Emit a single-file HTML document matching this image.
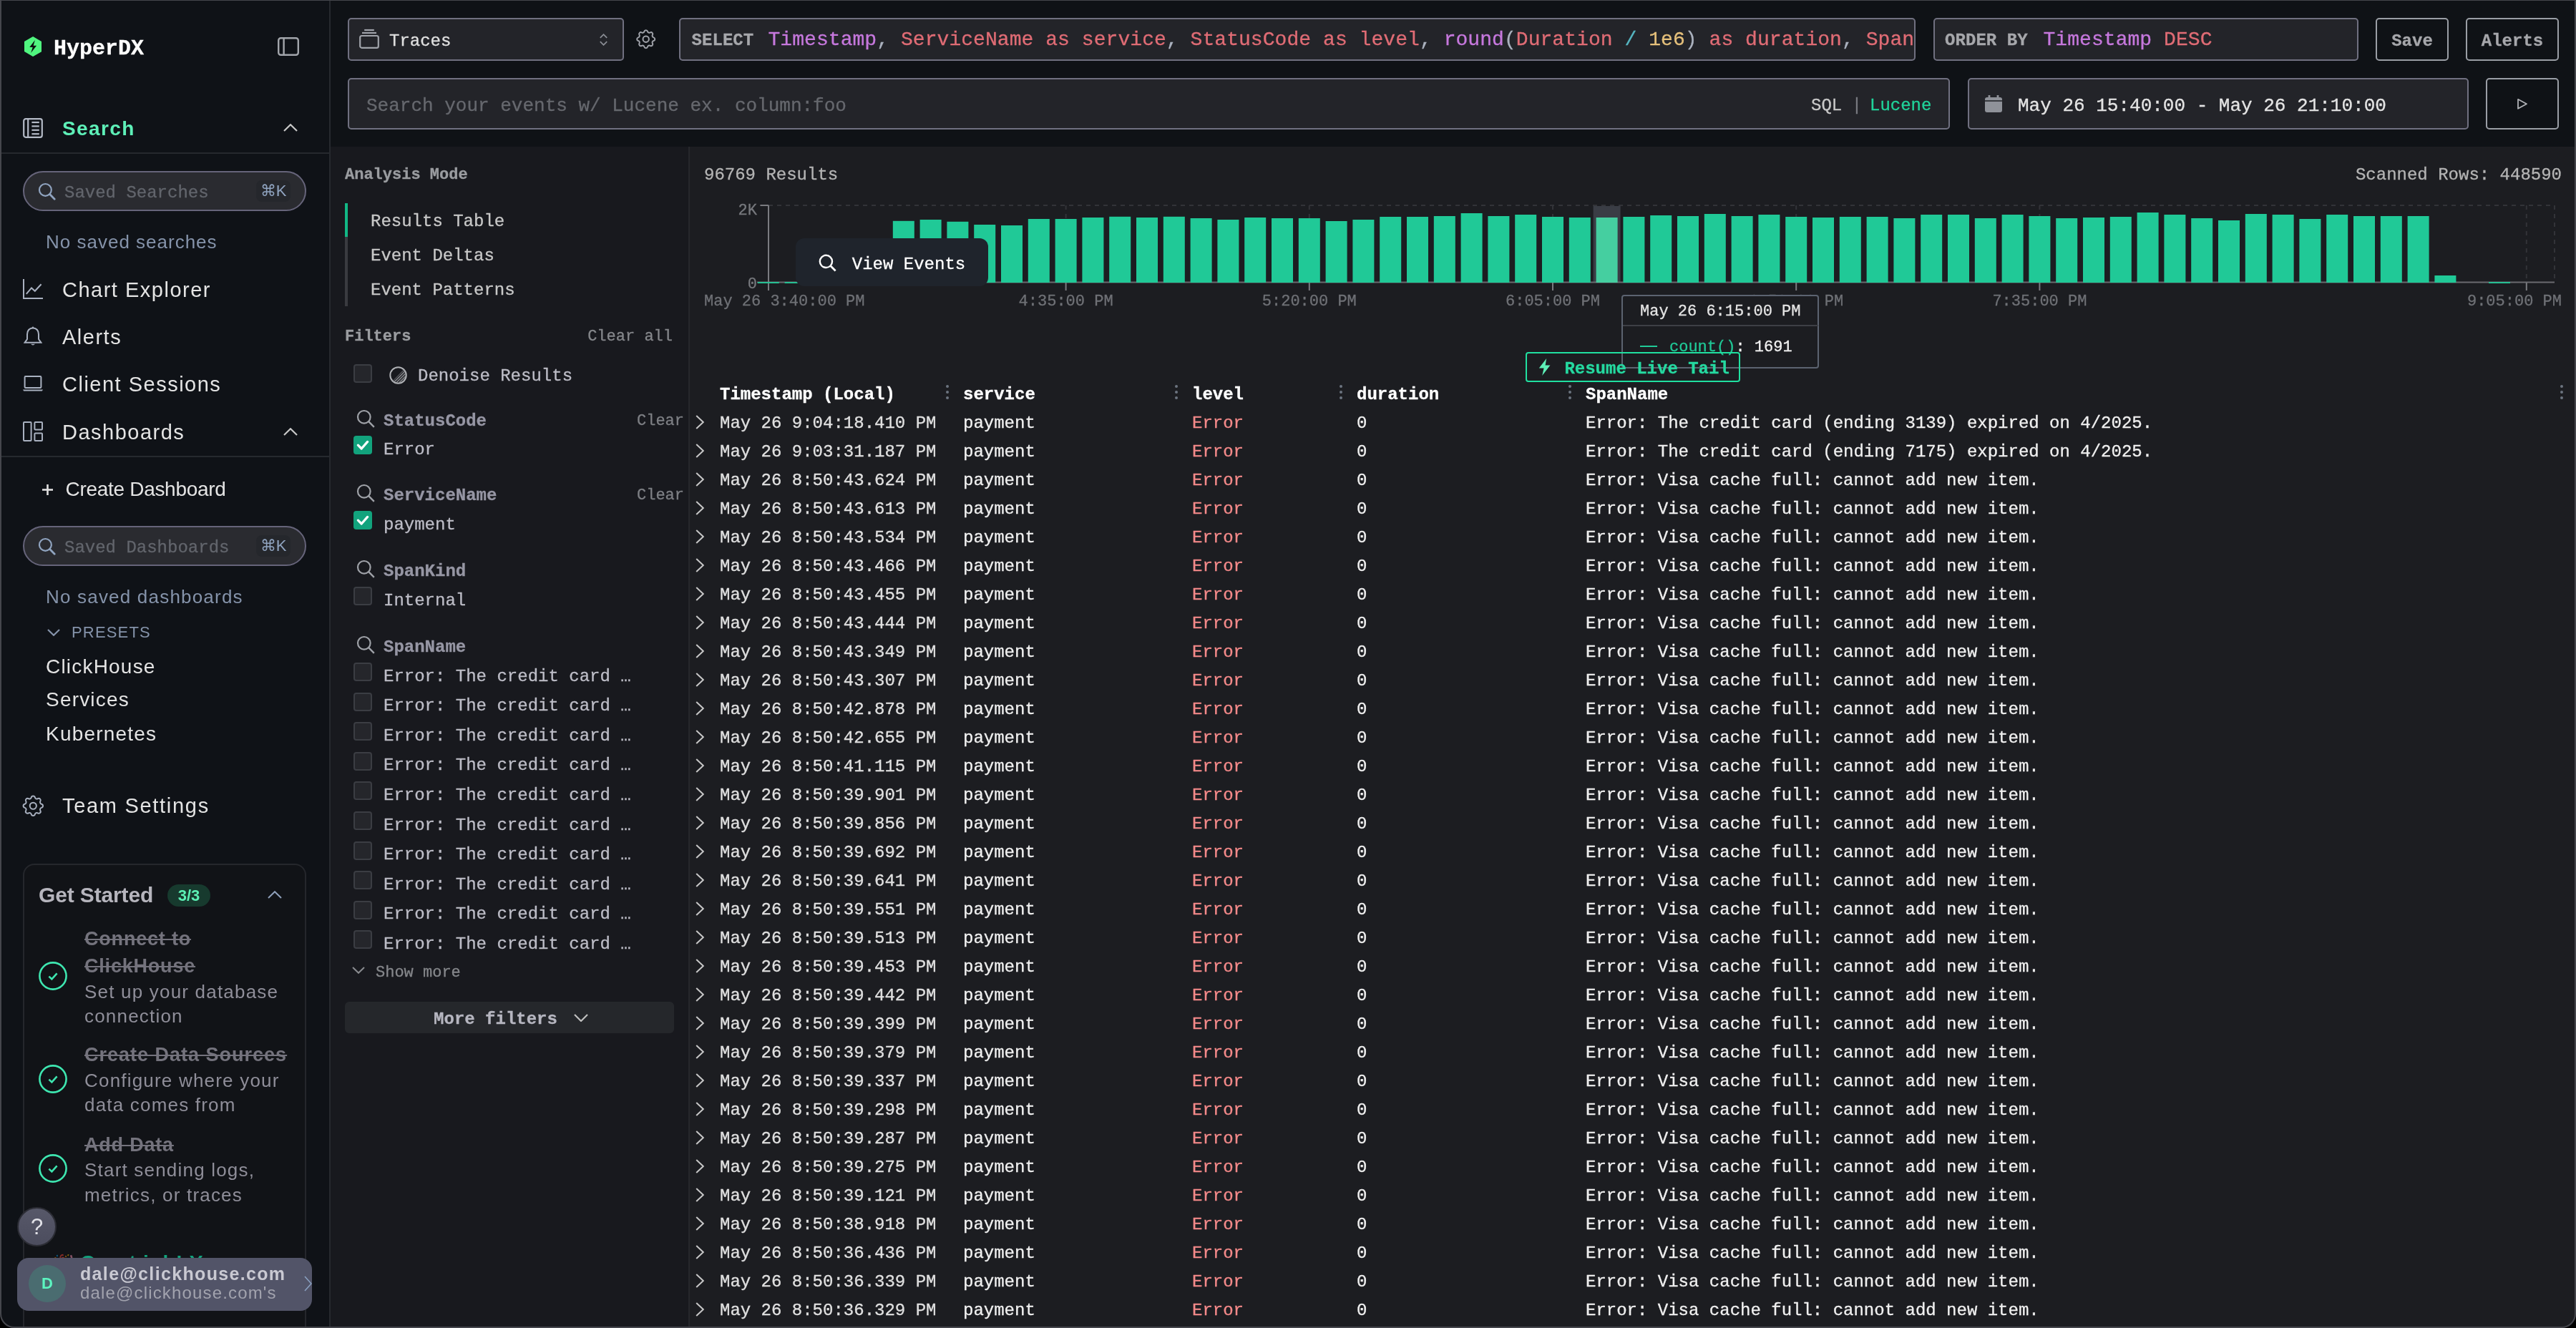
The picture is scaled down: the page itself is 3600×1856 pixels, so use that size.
<!DOCTYPE html>
<html><head><meta charset="utf-8"><title>HyperDX Search</title>
<style>
html,body{margin:0;padding:0;background:#000;}
body{width:1800px;height:928px;position:relative;overflow:hidden;}
@media (min-width: 2400px) { html { zoom: 2; } }
</style></head><body>
<div id="frame" style="will-change:transform;position:absolute;left:0;top:0;width:1800px;height:928px;overflow:hidden;background:#1c1d21;border-radius:0 0 10px 10px;"><div style="position:absolute;left:0px;top:0px;width:230px;height:928px;background:#0f1217;"></div><div style="position:absolute;left:230px;top:0px;width:1570px;height:102.5px;background:#0f1216;"></div><div style="position:absolute;left:230px;top:102.5px;width:251px;height:826px;background:#18191e;"></div><div style="position:absolute;left:481px;top:102.5px;width:1px;height:826px;background:#26272c;"></div><div style="position:absolute;left:230px;top:0px;width:1px;height:928px;background:#26292e;"></div><svg style="position:absolute;left:16.93px;top:25.46px;" width="12.1" height="14.04" viewBox="0 0 12.1 14.04"><path d="M6.05 0 L12.1 3.5 L12.1 10.54 L6.05 14.04 L0 10.54 L0 3.5 Z" fill="#50f57f"/><path d="M7.45 2.45 L3.65 7.55 L5.85 7.55 L4.6 11.5 L8.55 6.4 L6.35 6.4 Z" fill="#0d1110"/></svg><div style="position:absolute;left:37.5px;top:23.25px;line-height:21px;font-family:'Liberation Mono', monospace;font-size:15px;font-weight:700;color:#ffffff;white-space:nowrap;-webkit-text-stroke:0.15px currentColor;">HyperDX</div><svg style="position:absolute;left:194px;top:26px;" width="15" height="13" viewBox="0 0 15 13"><rect x="0.6" y="0.6" width="13.8" height="11.8" rx="1.6" fill="none" stroke="#a2a5ab" stroke-width="1.2"/><line x1="4.3" y1="0.6" x2="4.3" y2="12.4" stroke="#a2a5ab" stroke-width="1.2"/></svg><svg style="position:absolute;left:16px;top:82.5px;" width="14" height="14" viewBox="0 0 14 14"><rect x="0.6" y="0.6" width="12.8" height="12.8" rx="1.4" fill="none" stroke="#b4bac6" stroke-width="1.1"/><line x1="3.6" y1="0.6" x2="3.6" y2="13.4" stroke="#b4bac6" stroke-width="1.1"/><g stroke="#b4bac6" stroke-width="1.1"><line x1="6.2" y1="3" x2="11.4" y2="3"/><line x1="6.2" y1="5.7" x2="11.4" y2="5.7"/><line x1="6.2" y1="8.4" x2="11.4" y2="8.4"/><line x1="6.2" y1="11.1" x2="11.4" y2="11.1"/></g></svg><div style="position:absolute;left:43.5px;top:79.8px;line-height:20px;font-family:'Liberation Sans', sans-serif;font-size:14px;font-weight:700;color:#5ef0b8;white-space:nowrap;letter-spacing:0.7px;">Search</div><svg style="position:absolute;left:198px;top:86.7px;" width="10" height="5.5" viewBox="0 0 10 5.5"><polyline points="0.5,5.0 5.0,0.6 9.5,5.0" fill="none" stroke="#c8c8c8" stroke-width="1.1"/></svg><div style="position:absolute;left:0px;top:106.5px;width:230px;height:1px;background:#25292e;"></div><div style="position:absolute;left:16px;top:119.5px;width:198px;height:28px;box-sizing:border-box;border:1px solid #66647a;border-radius:14px;background:#2a2b30;"></div><svg style="position:absolute;left:26.5px;top:127.5px;" width="12.5" height="12.5" viewBox="0 0 12.5 12.5"><circle cx="5.2" cy="5.2" r="4.2" fill="none" stroke="#90a4c0" stroke-width="1.1"/><line x1="8.3" y1="8.3" x2="11.6" y2="11.6" stroke="#90a4c0" stroke-width="1.4" stroke-linecap="round"/></svg><div style="position:absolute;left:45px;top:126.25px;line-height:17px;font-family:'Liberation Mono', monospace;font-size:12px;font-weight:400;color:#62656c;white-space:nowrap;-webkit-text-stroke:0.15px currentColor;">Saved Searches</div><div style="position:absolute;left:179px;top:126.0px;width:24px;height:15px;border-radius:4px;background:#25272c;"></div><div style="position:absolute;left:-209px;width:800px;text-align:center;top:126.0px;line-height:15px;font-family:'Liberation Sans', sans-serif;font-size:11px;font-weight:400;color:#90a4c0;white-space:nowrap;">⌘K</div><div style="position:absolute;left:32px;top:159.75px;line-height:18px;font-family:'Liberation Sans', sans-serif;font-size:13px;font-weight:400;color:#8593aa;white-space:nowrap;letter-spacing:0.5px;">No saved searches</div><svg style="position:absolute;left:16px;top:195px;" width="14" height="14" viewBox="0 0 14 14"><polyline points="0.5,0 0.5,13.5 14,13.5" fill="none" stroke="#a9b1c0" stroke-width="1"/><polyline points="2.4,10.4 6,6.2 8.4,8.4 12.8,3.6" fill="none" stroke="#a9b1c0" stroke-width="1"/></svg><div style="position:absolute;left:43.5px;top:192.5px;line-height:20px;font-family:'Liberation Sans', sans-serif;font-size:14.5px;font-weight:400;color:#e4e4e4;white-space:nowrap;letter-spacing:0.75px;">Chart Explorer</div><svg style="position:absolute;left:16.5px;top:228px;" width="13" height="14.5" viewBox="0 0 13 14.5"><path d="M6.5 1.2 C3.9 1.2 2.5 3.2 2.5 5.6 L2.5 9 L0.8 11.4 L12.2 11.4 L10.5 9 L10.5 5.6 C10.5 3.2 9.1 1.2 6.5 1.2 Z" fill="none" stroke="#a9b1c0" stroke-width="1"/><path d="M5 12.4 Q6.5 14.2 8 12.4 Z" fill="#a9b1c0"/><circle cx="6.5" cy="0.9" r="0.6" fill="#a9b1c0"/></svg><div style="position:absolute;left:43.5px;top:225.5px;line-height:20px;font-family:'Liberation Sans', sans-serif;font-size:14.5px;font-weight:400;color:#e4e4e4;white-space:nowrap;letter-spacing:0.75px;">Alerts</div><svg style="position:absolute;left:16px;top:262.5px;" width="14" height="11" viewBox="0 0 14 11"><rect x="1.3" y="0.5" width="11.4" height="8" rx="0.6" fill="none" stroke="#a9b1c0" stroke-width="1"/><path d="M0 9.8 L14 9.8 L13.4 10.7 L0.6 10.7 Z" fill="#a9b1c0"/></svg><div style="position:absolute;left:43.5px;top:258.5px;line-height:20px;font-family:'Liberation Sans', sans-serif;font-size:14.5px;font-weight:400;color:#e4e4e4;white-space:nowrap;letter-spacing:0.75px;">Client Sessions</div><svg style="position:absolute;left:16px;top:294.5px;" width="14" height="14" viewBox="0 0 14 14"><rect x="0.5" y="0.5" width="5.3" height="13" rx="0.5" fill="none" stroke="#a9b1c0" stroke-width="1"/><rect x="8.2" y="0.5" width="5.3" height="5.3" rx="0.5" fill="none" stroke="#a9b1c0" stroke-width="1"/><rect x="8.2" y="8.2" width="5.3" height="5.3" rx="0.5" fill="none" stroke="#a9b1c0" stroke-width="1"/></svg><div style="position:absolute;left:43.5px;top:292.0px;line-height:20px;font-family:'Liberation Sans', sans-serif;font-size:14.5px;font-weight:400;color:#e4e4e4;white-space:nowrap;letter-spacing:0.75px;">Dashboards</div><svg style="position:absolute;left:198px;top:299px;" width="10" height="5.5" viewBox="0 0 10 5.5"><polyline points="0.5,5.0 5.0,0.6 9.5,5.0" fill="none" stroke="#c8c8c8" stroke-width="1.1"/></svg><div style="position:absolute;left:0px;top:318.5px;width:230px;height:1px;background:#25292e;"></div><svg style="position:absolute;left:29.5px;top:338.5px;" width="7.5" height="7.5" viewBox="0 0 7.5 7.5"><line x1="3.75" y1="0" x2="3.75" y2="7.5" stroke="#e0e0e0" stroke-width="1.3"/><line x1="0" y1="3.75" x2="7.5" y2="3.75" stroke="#e0e0e0" stroke-width="1.3"/></svg><div style="position:absolute;left:45.75px;top:332.0px;line-height:20px;font-family:'Liberation Sans', sans-serif;font-size:14px;font-weight:400;color:#e4e4e4;white-space:nowrap;letter-spacing:-0.15px;">Create Dashboard</div><div style="position:absolute;left:16px;top:367.5px;width:198px;height:28px;box-sizing:border-box;border:1px solid #66647a;border-radius:14px;background:#2a2b30;"></div><svg style="position:absolute;left:26.5px;top:375.5px;" width="12.5" height="12.5" viewBox="0 0 12.5 12.5"><circle cx="5.2" cy="5.2" r="4.2" fill="none" stroke="#90a4c0" stroke-width="1.1"/><line x1="8.3" y1="8.3" x2="11.6" y2="11.6" stroke="#90a4c0" stroke-width="1.4" stroke-linecap="round"/></svg><div style="position:absolute;left:45px;top:374.25px;line-height:17px;font-family:'Liberation Mono', monospace;font-size:12px;font-weight:400;color:#62656c;white-space:nowrap;-webkit-text-stroke:0.15px currentColor;">Saved Dashboards</div><div style="position:absolute;left:179px;top:374.0px;width:24px;height:15px;border-radius:4px;background:#25272c;"></div><div style="position:absolute;left:-209px;width:800px;text-align:center;top:374.0px;line-height:15px;font-family:'Liberation Sans', sans-serif;font-size:11px;font-weight:400;color:#90a4c0;white-space:nowrap;">⌘K</div><div style="position:absolute;left:32px;top:407.75px;line-height:18px;font-family:'Liberation Sans', sans-serif;font-size:13px;font-weight:400;color:#8593aa;white-space:nowrap;letter-spacing:0.6px;">No saved dashboards</div><svg style="position:absolute;left:33px;top:439.5px;" width="9" height="5" viewBox="0 0 9 5"><polyline points="0.5,0.5 4.5,4.4 8.5,0.5" fill="none" stroke="#8593aa" stroke-width="1.1"/></svg><div style="position:absolute;left:50px;top:434.5px;line-height:15px;font-family:'Liberation Sans', sans-serif;font-size:11px;font-weight:400;color:#8593aa;white-space:nowrap;letter-spacing:0.58px;">PRESETS</div><div style="position:absolute;left:32px;top:455.75px;line-height:20px;font-family:'Liberation Sans', sans-serif;font-size:14px;font-weight:400;color:#e4e4e4;white-space:nowrap;letter-spacing:0.6px;">ClickHouse</div><div style="position:absolute;left:32px;top:479.0px;line-height:20px;font-family:'Liberation Sans', sans-serif;font-size:14px;font-weight:400;color:#e4e4e4;white-space:nowrap;letter-spacing:0.6px;">Services</div><div style="position:absolute;left:32px;top:502.75px;line-height:20px;font-family:'Liberation Sans', sans-serif;font-size:14px;font-weight:400;color:#e4e4e4;white-space:nowrap;letter-spacing:0.6px;">Kubernetes</div><svg style="position:absolute;left:13.85px;top:553.85px;" width="18.3" height="18.3" viewBox="0 0 24 24"><path d="M10.325 4.317c.426 -1.756 2.924 -1.756 3.35 0a1.724 1.724 0 0 0 2.573 1.066c1.543 -.94 3.31 .826 2.37 2.37a1.724 1.724 0 0 0 1.065 2.572c1.756 .426 1.756 2.924 0 3.35a1.724 1.724 0 0 0 -1.066 2.573c.94 1.543 -.826 3.31 -2.37 2.37a1.724 1.724 0 0 0 -2.572 1.065c-.426 1.756 -2.924 1.756 -3.35 0a1.724 1.724 0 0 0 -2.573 -1.066c-1.543 .94 -3.31 -.826 -2.37 -2.37a1.724 1.724 0 0 0 -1.065 -2.572c-1.756 -.426 -1.756 -2.924 0 -3.35a1.724 1.724 0 0 0 1.066 -2.573c-.94 -1.543 .826 -3.31 2.37 -2.37c1 .608 2.296 .07 2.572 -1.065z" fill="none" stroke="#a9b1c0" stroke-width="1.3"/><circle cx="12" cy="12" r="3" fill="none" stroke="#a9b1c0" stroke-width="1.3"/></svg><div style="position:absolute;left:43.5px;top:553.0px;line-height:20px;font-family:'Liberation Sans', sans-serif;font-size:14.5px;font-weight:400;color:#e4e4e4;white-space:nowrap;letter-spacing:0.85px;">Team Settings</div><div style="position:absolute;left:16px;top:603.5px;width:198px;height:340px;box-sizing:border-box;border:1px solid #25272c;border-radius:8px;background:#111317;"></div><div style="position:absolute;left:27px;top:615.0px;line-height:21px;font-family:'Liberation Sans', sans-serif;font-size:15px;font-weight:700;color:#b6b5bd;white-space:nowrap;letter-spacing:-0.07px;">Get Started</div><div style="position:absolute;left:117px;top:618px;width:30px;height:15.5px;border-radius:8px;background:#173a2e;"></div><div style="position:absolute;left:-268px;width:800px;text-align:center;top:618.3px;line-height:15px;font-family:'Liberation Sans', sans-serif;font-size:11px;font-weight:700;color:#5cf0b5;white-space:nowrap;">3/3</div><svg style="position:absolute;left:187px;top:622.5px;" width="10" height="5.5" viewBox="0 0 10 5.5"><polyline points="0.5,5.0 5.0,0.6 9.5,5.0" fill="none" stroke="#8fa0bb" stroke-width="1"/></svg><svg style="position:absolute;left:27px;top:671.75px;" width="20" height="20" viewBox="0 0 20 20"><circle cx="10" cy="10" r="9.3" fill="none" stroke="#3ee6b0" stroke-width="1.3"/><polyline points="7.2,10.3 9.2,12.2 12.8,8.2" fill="none" stroke="#3ee6b0" stroke-width="1.3"/></svg><div style="position:absolute;left:59px;top:646.5px;line-height:19px;font-family:'Liberation Sans', sans-serif;font-size:13.5px;font-weight:700;color:#74737d;white-space:nowrap;letter-spacing:0.4px;text-decoration:line-through;">Connect to</div><div style="position:absolute;left:59px;top:665.5px;line-height:19px;font-family:'Liberation Sans', sans-serif;font-size:13.5px;font-weight:700;color:#74737d;white-space:nowrap;letter-spacing:0.4px;text-decoration:line-through;">ClickHouse</div><div style="position:absolute;left:59px;top:683.75px;line-height:18px;font-family:'Liberation Sans', sans-serif;font-size:13px;font-weight:400;color:#8f8e99;white-space:nowrap;letter-spacing:0.6px;">Set up your database</div><div style="position:absolute;left:59px;top:700.75px;line-height:18px;font-family:'Liberation Sans', sans-serif;font-size:13px;font-weight:400;color:#8f8e99;white-space:nowrap;letter-spacing:0.6px;">connection</div><svg style="position:absolute;left:27px;top:744px;" width="20" height="20" viewBox="0 0 20 20"><circle cx="10" cy="10" r="9.3" fill="none" stroke="#3ee6b0" stroke-width="1.3"/><polyline points="7.2,10.3 9.2,12.2 12.8,8.2" fill="none" stroke="#3ee6b0" stroke-width="1.3"/></svg><div style="position:absolute;left:59px;top:727.5px;line-height:19px;font-family:'Liberation Sans', sans-serif;font-size:13.5px;font-weight:700;color:#74737d;white-space:nowrap;letter-spacing:0.5px;text-decoration:line-through;">Create Data Sources</div><div style="position:absolute;left:59px;top:746.0px;line-height:18px;font-family:'Liberation Sans', sans-serif;font-size:13px;font-weight:400;color:#8f8e99;white-space:nowrap;letter-spacing:0.6px;">Configure where your</div><div style="position:absolute;left:59px;top:763.0px;line-height:18px;font-family:'Liberation Sans', sans-serif;font-size:13px;font-weight:400;color:#8f8e99;white-space:nowrap;letter-spacing:0.6px;">data comes from</div><svg style="position:absolute;left:27px;top:806.5px;" width="20" height="20" viewBox="0 0 20 20"><circle cx="10" cy="10" r="9.3" fill="none" stroke="#3ee6b0" stroke-width="1.3"/><polyline points="7.2,10.3 9.2,12.2 12.8,8.2" fill="none" stroke="#3ee6b0" stroke-width="1.3"/></svg><div style="position:absolute;left:59px;top:790.5px;line-height:19px;font-family:'Liberation Sans', sans-serif;font-size:13.5px;font-weight:700;color:#74737d;white-space:nowrap;letter-spacing:0.4px;text-decoration:line-through;">Add Data</div><div style="position:absolute;left:59px;top:808.5px;line-height:18px;font-family:'Liberation Sans', sans-serif;font-size:13px;font-weight:400;color:#8f8e99;white-space:nowrap;letter-spacing:0.6px;">Start sending logs,</div><div style="position:absolute;left:59px;top:825.75px;line-height:18px;font-family:'Liberation Sans', sans-serif;font-size:13px;font-weight:400;color:#8f8e99;white-space:nowrap;letter-spacing:0.6px;">metrics, or traces</div><div style="position:absolute;left:12px;top:843.5px;width:27.5px;height:27.5px;box-sizing:border-box;border-radius:50%;background:linear-gradient(#575869,#4c4d5e);border:1px solid #2c2d35;"></div><div style="position:absolute;left:-374.25px;width:800px;text-align:center;top:846.5px;line-height:22px;font-family:'Liberation Sans', sans-serif;font-size:15.5px;font-weight:400;color:#e2e2e8;white-space:nowrap;">?</div><div style="position:absolute;left:37px;top:874.5px;line-height:17px;font-family:'Liberation Sans', sans-serif;font-size:12px;font-weight:400;color:#c04060;white-space:nowrap;opacity:0.5;">🎉</div><div style="position:absolute;left:56px;top:870px;width:102px;height:20px;overflow:hidden;"><div style="position:absolute;left:0;top:2.4px;line-height:20px;font-family:'Liberation Sans', sans-serif;font-size:14px;font-weight:700;color:#12a37d;white-space:nowrap;letter-spacing:0.6px;">Great job! You&#39;re all set</div></div><div style="position:absolute;left:12px;top:879px;width:206px;height:37px;border-radius:8px;background:#525468;"></div><div style="position:absolute;left:20px;top:884px;width:26px;height:26px;border-radius:50%;background:#4a6c70;"></div><div style="position:absolute;left:-367px;width:800px;text-align:center;top:889.5px;line-height:15px;font-family:'Liberation Sans', sans-serif;font-size:11px;font-weight:700;color:#5cf5c0;white-space:nowrap;">D</div><div style="position:absolute;left:56px;top:880.75px;line-height:18px;font-family:'Liberation Sans', sans-serif;font-size:12.5px;font-weight:700;color:#c9c9d2;white-space:nowrap;letter-spacing:0.67px;">dale@clickhouse.com</div><div style="position:absolute;left:56px;top:895.0px;line-height:17px;font-family:'Liberation Sans', sans-serif;font-size:12px;font-weight:400;color:#a2a3ae;white-space:nowrap;letter-spacing:0.58px;">dale@clickhouse.com&#x27;s</div><svg style="position:absolute;left:212.5px;top:891.5px;" width="5.5" height="11" viewBox="0 0 5.5 11"><polyline points="0.5,0.5 5,5.5 0.5,10.5" fill="none" stroke="#8aa0c0" stroke-width="0.8"/></svg><div style="position:absolute;left:243px;top:12.5px;width:193px;height:30px;box-sizing:border-box;border:1px solid #707080;border-radius:2.5px;background:#232429;"></div><svg style="position:absolute;left:251px;top:20px;" width="14" height="14" viewBox="0 0 14 14"><rect x="0.6" y="5" width="12.8" height="8.4" rx="1.2" fill="none" stroke="#a0a3aa" stroke-width="1.1"/><line x1="2" y1="3" x2="12" y2="3" stroke="#a0a3aa" stroke-width="1.1"/><line x1="3.6" y1="1" x2="10.4" y2="1" stroke="#a0a3aa" stroke-width="1.1"/></svg><div style="position:absolute;left:272px;top:20.25px;line-height:17px;font-family:'Liberation Mono', monospace;font-size:12px;font-weight:400;color:#e0e0e0;white-space:nowrap;-webkit-text-stroke:0.15px currentColor;">Traces</div><svg style="position:absolute;left:418.75px;top:23.5px;" width="5.5" height="8.5" viewBox="0 0 5.5 8.5"><polyline points="0.4,2.9 2.75,0.6 5.1,2.9" fill="none" stroke="#8a8d94" stroke-width="0.9"/><polyline points="0.4,5.6 2.75,7.9 5.1,5.6" fill="none" stroke="#8a8d94" stroke-width="0.9"/></svg><svg style="position:absolute;left:442.9px;top:19.15px;" width="16.7" height="16.7" viewBox="0 0 24 24"><path d="M10.325 4.317c.426 -1.756 2.924 -1.756 3.35 0a1.724 1.724 0 0 0 2.573 1.066c1.543 -.94 3.31 .826 2.37 2.37a1.724 1.724 0 0 0 1.065 2.572c1.756 .426 1.756 2.924 0 3.35a1.724 1.724 0 0 0 -1.066 2.573c.94 1.543 -.826 3.31 -2.37 2.37a1.724 1.724 0 0 0 -2.572 1.065c-.426 1.756 -2.924 1.756 -3.35 0a1.724 1.724 0 0 0 -2.573 -1.066c-1.543 .94 -3.31 -.826 -2.37 -2.37a1.724 1.724 0 0 0 -1.065 -2.572c-1.756 -.426 -1.756 -2.924 0 -3.35a1.724 1.724 0 0 0 1.066 -2.573c-.94 -1.543 .826 -3.31 2.37 -2.37c1 .608 2.296 .07 2.572 -1.065z" fill="none" stroke="#a0a3aa" stroke-width="1.45"/><circle cx="12" cy="12" r="3" fill="none" stroke="#a0a3aa" stroke-width="1.45"/></svg><div style="position:absolute;left:474.5px;top:12.5px;width:864px;height:30px;box-sizing:border-box;border:1px solid #707080;border-radius:2.5px;background:#232429;"></div><div style="position:absolute;left:475.5px;top:13.5px;width:862px;height:27.5px;overflow:hidden;"><div style="position:absolute;left:7.75px;top:4.5px;line-height:20px;font-family:'Liberation Mono', monospace;font-size:14px;letter-spacing:0.028px;white-space:nowrap;-webkit-text-stroke:0.15px currentColor;"><span style="font-weight:700;font-size:12px;color:#a6a7ab;display:inline-block;width:53.5px;">SELECT</span><span style="color:#c678dd">Timestamp</span><span style="color:#abb2bf">,</span> <span style="color:#e06c75">ServiceName as service</span><span style="color:#abb2bf">,</span> <span style="color:#e06c75">StatusCode as level</span><span style="color:#abb2bf">,</span> <span style="color:#c678dd">round</span><span style="color:#abb2bf">(</span><span style="color:#e06c75">Duration </span><span style="color:#56b6c2">/</span> <span style="color:#e5c07b">1e6</span><span style="color:#abb2bf">)</span> <span style="color:#e06c75">as duration</span><span style="color:#abb2bf">,</span> <span style="color:#e06c75">SpanName</span></div></div><div style="position:absolute;left:1351px;top:12.5px;width:297px;height:30px;box-sizing:border-box;border:1px solid #707080;border-radius:2.5px;background:#232429;"></div><div style="position:absolute;left:1359px;top:18px;line-height:20px;font-family:'Liberation Mono', monospace;font-size:14px;letter-spacing:0.028px;white-space:nowrap;-webkit-text-stroke:0.15px currentColor;"><span style="font-weight:700;font-size:12px;color:#a6a7ab;display:inline-block;width:68.75px;">ORDER BY</span><span style="color:#c678dd">Timestamp</span> <span style="color:#e06c75">DESC</span></div><div style="position:absolute;left:1660px;top:12.5px;width:51px;height:30px;box-sizing:border-box;border:1px solid #9a9ea5;border-radius:2.5px;background:#0f1216;"></div><div style="position:absolute;left:1285.5px;width:800px;text-align:center;top:20.25px;line-height:17px;font-family:'Liberation Mono', monospace;font-size:12px;font-weight:700;color:#a6a7ab;white-space:nowrap;-webkit-text-stroke:0.15px currentColor;">Save</div><div style="position:absolute;left:1723px;top:12.5px;width:65px;height:30px;box-sizing:border-box;border:1px solid #9a9ea5;border-radius:2.5px;background:#0f1216;"></div><div style="position:absolute;left:1355.5px;width:800px;text-align:center;top:20.25px;line-height:17px;font-family:'Liberation Mono', monospace;font-size:12px;font-weight:700;color:#a6a7ab;white-space:nowrap;-webkit-text-stroke:0.15px currentColor;">Alerts</div><div style="position:absolute;left:243px;top:54.5px;width:1119.5px;height:36px;box-sizing:border-box;border:1px solid #707080;border-radius:2.5px;background:#232429;"></div><div style="position:absolute;left:256px;top:64.75px;line-height:18px;font-family:'Liberation Mono', monospace;font-size:13px;font-weight:400;color:#66686e;white-space:nowrap;-webkit-text-stroke:0.15px currentColor;">Search your events w/ Lucene ex. column:foo</div><div style="position:absolute;left:1265.5px;top:65.25px;line-height:17px;font-family:'Liberation Mono', monospace;font-size:12px;font-weight:400;color:#c8c8c8;white-space:nowrap;-webkit-text-stroke:0.15px currentColor;">SQL</div><div style="position:absolute;left:897.5px;width:800px;text-align:center;top:65.25px;line-height:17px;font-family:'Liberation Mono', monospace;font-size:12px;font-weight:400;color:#7a7c82;white-space:nowrap;-webkit-text-stroke:0.15px currentColor;">|</div><div style="position:absolute;left:1306.5px;top:65.25px;line-height:17px;font-family:'Liberation Mono', monospace;font-size:12px;font-weight:400;color:#20d39a;white-space:nowrap;-webkit-text-stroke:0.15px currentColor;">Lucene</div><div style="position:absolute;left:1375px;top:54.5px;width:350px;height:36px;box-sizing:border-box;border:1px solid #707080;border-radius:2.5px;background:#232429;"></div><svg style="position:absolute;left:1387px;top:66.5px;" width="12" height="12" viewBox="0 0 12 12"><rect x="0" y="1.5" width="12" height="10.5" rx="1.5" fill="#8f9299"/><rect x="2.3" y="0" width="1.4" height="2.6" fill="#8f9299"/><rect x="8.3" y="0" width="1.4" height="2.6" fill="#8f9299"/><rect x="0" y="3.6" width="12" height="0.8" fill="#25262b"/></svg><div style="position:absolute;left:1410px;top:64.75px;line-height:18px;font-family:'Liberation Mono', monospace;font-size:13px;font-weight:400;color:#e4e4e4;white-space:nowrap;-webkit-text-stroke:0.15px currentColor;">May 26 15:40:00 - May 26 21:10:00</div><div style="position:absolute;left:1737px;top:54.5px;width:51px;height:36px;box-sizing:border-box;border:1px solid #9a9ea5;border-radius:2.5px;background:#0f1216;"></div><svg style="position:absolute;left:1758.5px;top:68.4px;" width="8" height="8.5" viewBox="0 0 8 8.5"><polygon points="1,0.9 7,4.1 1,7.4" fill="none" stroke="#b0b2b6" stroke-width="0.9" stroke-linejoin="round"/></svg><div style="position:absolute;left:241px;top:115.0px;line-height:15px;font-family:'Liberation Mono', monospace;font-size:11px;font-weight:700;color:#9a9ca0;white-space:nowrap;-webkit-text-stroke:0.15px currentColor;">Analysis Mode</div><div style="position:absolute;left:241px;top:142px;width:2px;height:72px;background:#3a3b40;"></div><div style="position:absolute;left:241px;top:142px;width:2px;height:23.5px;background:#12b886;"></div><div style="position:absolute;left:259px;top:146.25px;line-height:17px;font-family:'Liberation Mono', monospace;font-size:12px;font-weight:400;color:#c8c8c8;white-space:nowrap;-webkit-text-stroke:0.15px currentColor;">Results Table</div><div style="position:absolute;left:259px;top:170.25px;line-height:17px;font-family:'Liberation Mono', monospace;font-size:12px;font-weight:400;color:#c8c8c8;white-space:nowrap;-webkit-text-stroke:0.15px currentColor;">Event Deltas</div><div style="position:absolute;left:259px;top:194.25px;line-height:17px;font-family:'Liberation Mono', monospace;font-size:12px;font-weight:400;color:#c8c8c8;white-space:nowrap;-webkit-text-stroke:0.15px currentColor;">Event Patterns</div><div style="position:absolute;left:241px;top:227.75px;line-height:15px;font-family:'Liberation Mono', monospace;font-size:11px;font-weight:700;color:#9a9ca0;white-space:nowrap;-webkit-text-stroke:0.15px currentColor;">Filters</div><div style="position:absolute;right:1330px;top:227.75px;line-height:15px;font-family:'Liberation Mono', monospace;font-size:11px;font-weight:400;color:#85878b;white-space:nowrap;-webkit-text-stroke:0.15px currentColor;">Clear all</div><div style="position:absolute;left:247px;top:254.5px;width:13px;height:13px;box-sizing:border-box;border-radius:2px;background:#25262b;border:1px solid #3b3d43;"></div><svg style="position:absolute;left:272px;top:255.75px;" width="12.5" height="12.5" viewBox="0 0 12.5 12.5"><defs><pattern id="hp" width="1.4" height="1.4" patternUnits="userSpaceOnUse" patternTransform="rotate(45)"><rect width="0.7" height="1.4" fill="#9a9ca0"/></pattern></defs><circle cx="6.25" cy="6.25" r="5.6" fill="none" stroke="#b0b2b6" stroke-width="1"/><path d="M10.2 2.3 A5.6 5.6 0 0 1 2.3 10.2 Z" fill="url(#hp)"/></svg><div style="position:absolute;left:292px;top:254.25px;line-height:17px;font-family:'Liberation Mono', monospace;font-size:12px;font-weight:400;color:#bdbdc7;white-space:nowrap;-webkit-text-stroke:0.15px currentColor;">Denoise Results</div><svg style="position:absolute;left:249px;top:285.75px;" width="13" height="13" viewBox="0 0 13 13"><circle cx="5.4" cy="5.4" r="4.4" fill="none" stroke="#9fa2a8" stroke-width="1.1"/><line x1="8.6" y1="8.6" x2="12.4" y2="12.4" stroke="#9fa2a8" stroke-width="1.2"/></svg><div style="position:absolute;left:268px;top:285.75px;line-height:17px;font-family:'Liberation Mono', monospace;font-size:12px;font-weight:700;color:#9696a4;white-space:nowrap;-webkit-text-stroke:0.15px currentColor;">StatusCode</div><div style="position:absolute;right:1322px;top:286.75px;line-height:15px;font-family:'Liberation Mono', monospace;font-size:11px;font-weight:400;color:#7d7f84;white-space:nowrap;-webkit-text-stroke:0.15px currentColor;">Clear</div><div style="position:absolute;left:247px;top:304.5px;width:13px;height:13px;border-radius:2px;background:#12a37d;"></div><svg style="position:absolute;left:247px;top:304.5px;" width="13" height="13" viewBox="0 0 13 13"><polyline points="3.2,6.6 5.6,9 9.8,4.2" fill="none" stroke="#ffffff" stroke-width="1.6" stroke-linecap="round" stroke-linejoin="round"/></svg><div style="position:absolute;left:268px;top:305.75px;line-height:17px;font-family:'Liberation Mono', monospace;font-size:12px;font-weight:400;color:#bdbdc7;white-space:nowrap;-webkit-text-stroke:0.15px currentColor;">Error</div><svg style="position:absolute;left:249px;top:337.75px;" width="13" height="13" viewBox="0 0 13 13"><circle cx="5.4" cy="5.4" r="4.4" fill="none" stroke="#9fa2a8" stroke-width="1.1"/><line x1="8.6" y1="8.6" x2="12.4" y2="12.4" stroke="#9fa2a8" stroke-width="1.2"/></svg><div style="position:absolute;left:268px;top:337.75px;line-height:17px;font-family:'Liberation Mono', monospace;font-size:12px;font-weight:700;color:#9696a4;white-space:nowrap;-webkit-text-stroke:0.15px currentColor;">ServiceName</div><div style="position:absolute;right:1322px;top:338.75px;line-height:15px;font-family:'Liberation Mono', monospace;font-size:11px;font-weight:400;color:#7d7f84;white-space:nowrap;-webkit-text-stroke:0.15px currentColor;">Clear</div><div style="position:absolute;left:247px;top:357px;width:13px;height:13px;border-radius:2px;background:#12a37d;"></div><svg style="position:absolute;left:247px;top:357px;" width="13" height="13" viewBox="0 0 13 13"><polyline points="3.2,6.6 5.6,9 9.8,4.2" fill="none" stroke="#ffffff" stroke-width="1.6" stroke-linecap="round" stroke-linejoin="round"/></svg><div style="position:absolute;left:268px;top:358.25px;line-height:17px;font-family:'Liberation Mono', monospace;font-size:12px;font-weight:400;color:#bdbdc7;white-space:nowrap;-webkit-text-stroke:0.15px currentColor;">payment</div><svg style="position:absolute;left:249px;top:390.75px;" width="13" height="13" viewBox="0 0 13 13"><circle cx="5.4" cy="5.4" r="4.4" fill="none" stroke="#9fa2a8" stroke-width="1.1"/><line x1="8.6" y1="8.6" x2="12.4" y2="12.4" stroke="#9fa2a8" stroke-width="1.2"/></svg><div style="position:absolute;left:268px;top:390.75px;line-height:17px;font-family:'Liberation Mono', monospace;font-size:12px;font-weight:700;color:#9696a4;white-space:nowrap;-webkit-text-stroke:0.15px currentColor;">SpanKind</div><div style="position:absolute;left:247px;top:410px;width:13px;height:13px;box-sizing:border-box;border-radius:2px;background:#25262b;border:1px solid #3b3d43;"></div><div style="position:absolute;left:268px;top:411.25px;line-height:17px;font-family:'Liberation Mono', monospace;font-size:12px;font-weight:400;color:#bdbdc7;white-space:nowrap;-webkit-text-stroke:0.15px currentColor;">Internal</div><svg style="position:absolute;left:249px;top:443.75px;" width="13" height="13" viewBox="0 0 13 13"><circle cx="5.4" cy="5.4" r="4.4" fill="none" stroke="#9fa2a8" stroke-width="1.1"/><line x1="8.6" y1="8.6" x2="12.4" y2="12.4" stroke="#9fa2a8" stroke-width="1.2"/></svg><div style="position:absolute;left:268px;top:443.75px;line-height:17px;font-family:'Liberation Mono', monospace;font-size:12px;font-weight:700;color:#9696a4;white-space:nowrap;-webkit-text-stroke:0.15px currentColor;">SpanName</div><div style="position:absolute;left:247px;top:463.0px;width:13px;height:13px;box-sizing:border-box;border-radius:2px;background:#25262b;border:1px solid #3b3d43;"></div><div style="position:absolute;left:268px;top:464.25px;line-height:17px;font-family:'Liberation Mono', monospace;font-size:12px;font-weight:400;color:#bdbdc7;white-space:nowrap;-webkit-text-stroke:0.15px currentColor;">Error: The credit card …</div><div style="position:absolute;left:247px;top:483.8px;width:13px;height:13px;box-sizing:border-box;border-radius:2px;background:#25262b;border:1px solid #3b3d43;"></div><div style="position:absolute;left:268px;top:485.05px;line-height:17px;font-family:'Liberation Mono', monospace;font-size:12px;font-weight:400;color:#bdbdc7;white-space:nowrap;-webkit-text-stroke:0.15px currentColor;">Error: The credit card …</div><div style="position:absolute;left:247px;top:504.6px;width:13px;height:13px;box-sizing:border-box;border-radius:2px;background:#25262b;border:1px solid #3b3d43;"></div><div style="position:absolute;left:268px;top:505.85px;line-height:17px;font-family:'Liberation Mono', monospace;font-size:12px;font-weight:400;color:#bdbdc7;white-space:nowrap;-webkit-text-stroke:0.15px currentColor;">Error: The credit card …</div><div style="position:absolute;left:247px;top:525.4px;width:13px;height:13px;box-sizing:border-box;border-radius:2px;background:#25262b;border:1px solid #3b3d43;"></div><div style="position:absolute;left:268px;top:526.65px;line-height:17px;font-family:'Liberation Mono', monospace;font-size:12px;font-weight:400;color:#bdbdc7;white-space:nowrap;-webkit-text-stroke:0.15px currentColor;">Error: The credit card …</div><div style="position:absolute;left:247px;top:546.2px;width:13px;height:13px;box-sizing:border-box;border-radius:2px;background:#25262b;border:1px solid #3b3d43;"></div><div style="position:absolute;left:268px;top:547.45px;line-height:17px;font-family:'Liberation Mono', monospace;font-size:12px;font-weight:400;color:#bdbdc7;white-space:nowrap;-webkit-text-stroke:0.15px currentColor;">Error: The credit card …</div><div style="position:absolute;left:247px;top:567.0px;width:13px;height:13px;box-sizing:border-box;border-radius:2px;background:#25262b;border:1px solid #3b3d43;"></div><div style="position:absolute;left:268px;top:568.25px;line-height:17px;font-family:'Liberation Mono', monospace;font-size:12px;font-weight:400;color:#bdbdc7;white-space:nowrap;-webkit-text-stroke:0.15px currentColor;">Error: The credit card …</div><div style="position:absolute;left:247px;top:587.8px;width:13px;height:13px;box-sizing:border-box;border-radius:2px;background:#25262b;border:1px solid #3b3d43;"></div><div style="position:absolute;left:268px;top:589.05px;line-height:17px;font-family:'Liberation Mono', monospace;font-size:12px;font-weight:400;color:#bdbdc7;white-space:nowrap;-webkit-text-stroke:0.15px currentColor;">Error: The credit card …</div><div style="position:absolute;left:247px;top:608.6px;width:13px;height:13px;box-sizing:border-box;border-radius:2px;background:#25262b;border:1px solid #3b3d43;"></div><div style="position:absolute;left:268px;top:609.85px;line-height:17px;font-family:'Liberation Mono', monospace;font-size:12px;font-weight:400;color:#bdbdc7;white-space:nowrap;-webkit-text-stroke:0.15px currentColor;">Error: The credit card …</div><div style="position:absolute;left:247px;top:629.4px;width:13px;height:13px;box-sizing:border-box;border-radius:2px;background:#25262b;border:1px solid #3b3d43;"></div><div style="position:absolute;left:268px;top:630.65px;line-height:17px;font-family:'Liberation Mono', monospace;font-size:12px;font-weight:400;color:#bdbdc7;white-space:nowrap;-webkit-text-stroke:0.15px currentColor;">Error: The credit card …</div><div style="position:absolute;left:247px;top:650.2px;width:13px;height:13px;box-sizing:border-box;border-radius:2px;background:#25262b;border:1px solid #3b3d43;"></div><div style="position:absolute;left:268px;top:651.45px;line-height:17px;font-family:'Liberation Mono', monospace;font-size:12px;font-weight:400;color:#bdbdc7;white-space:nowrap;-webkit-text-stroke:0.15px currentColor;">Error: The credit card …</div><svg style="position:absolute;left:246px;top:675.5px;" width="9" height="5" viewBox="0 0 9 5"><polyline points="0.5,0.5 4.5,4.4 8.5,0.5" fill="none" stroke="#8a8c90" stroke-width="1"/></svg><div style="position:absolute;left:262.5px;top:672.5px;line-height:15px;font-family:'Liberation Mono', monospace;font-size:11px;font-weight:400;color:#85878b;white-space:nowrap;-webkit-text-stroke:0.15px currentColor;">Show more</div><div style="position:absolute;left:241px;top:700px;width:230px;height:22px;border-radius:3px;background:#25272b;"></div><div style="position:absolute;left:-53.75px;width:800px;text-align:center;top:703.75px;line-height:17px;font-family:'Liberation Mono', monospace;font-size:12px;font-weight:700;color:#b6b6c0;white-space:nowrap;-webkit-text-stroke:0.15px currentColor;">More filters</div><svg style="position:absolute;left:401px;top:708.5px;" width="10" height="5.5" viewBox="0 0 10 5.5"><polyline points="0.5,0.5 5,5 9.5,0.5" fill="none" stroke="#c0c0c0" stroke-width="1.1"/></svg><div style="position:absolute;left:492px;top:114.0px;line-height:17px;font-family:'Liberation Mono', monospace;font-size:12px;font-weight:400;color:#b4b4b4;white-space:nowrap;-webkit-text-stroke:0.15px currentColor;">96769 Results</div><div style="position:absolute;right:10px;top:114.0px;line-height:17px;font-family:'Liberation Mono', monospace;font-size:12px;font-weight:400;color:#b4b4b4;white-space:nowrap;-webkit-text-stroke:0.15px currentColor;">Scanned Rows: 448590</div><svg style="position:absolute;left:0;top:0" width="1800" height="260" viewBox="0 0 1800 260"><line x1="537" y1="143.5" x2="1785" y2="143.5" stroke="#323338" stroke-width="1" stroke-dasharray="3 3"/><line x1="744.80" y1="143.5" x2="744.80" y2="197.5" stroke="#323338" stroke-width="1" stroke-dasharray="3 3"/><line x1="914.90" y1="143.5" x2="914.90" y2="197.5" stroke="#323338" stroke-width="1" stroke-dasharray="3 3"/><line x1="1085.00" y1="143.5" x2="1085.00" y2="197.5" stroke="#323338" stroke-width="1" stroke-dasharray="3 3"/><line x1="1255.10" y1="143.5" x2="1255.10" y2="197.5" stroke="#323338" stroke-width="1" stroke-dasharray="3 3"/><line x1="1425.20" y1="143.5" x2="1425.20" y2="197.5" stroke="#323338" stroke-width="1" stroke-dasharray="3 3"/><line x1="1765.40" y1="143.5" x2="1765.40" y2="197.5" stroke="#323338" stroke-width="1" stroke-dasharray="3 3"/><line x1="1785" y1="143.5" x2="1785" y2="197.5" stroke="#323338" stroke-width="1" stroke-dasharray="3 3"/><rect x="1113.30" y="144" width="19" height="53.5" fill="#3a3d45"/><line x1="529" y1="197.25" x2="1785" y2="197.25" stroke="#6a6b70" stroke-width="1"/><line x1="537" y1="143.5" x2="537" y2="203" stroke="#7a7b80" stroke-width="1"/><line x1="531.2" y1="143.5" x2="537" y2="143.5" stroke="#7a7b80" stroke-width="1"/><line x1="744.80" y1="197.5" x2="744.80" y2="203" stroke="#7a7b80" stroke-width="1"/><line x1="914.90" y1="197.5" x2="914.90" y2="203" stroke="#7a7b80" stroke-width="1"/><line x1="1085.00" y1="197.5" x2="1085.00" y2="203" stroke="#7a7b80" stroke-width="1"/><line x1="1255.10" y1="197.5" x2="1255.10" y2="203" stroke="#7a7b80" stroke-width="1"/><line x1="1425.20" y1="197.5" x2="1425.20" y2="203" stroke="#7a7b80" stroke-width="1"/><line x1="1765.40" y1="197.5" x2="1765.40" y2="203" stroke="#7a7b80" stroke-width="1"/><rect x="529.40" y="197.1" width="15" height="0.9" fill="#20c997"/><rect x="548.30" y="197.1" width="15" height="0.9" fill="#20c997"/><rect x="567.20" y="197.1" width="15" height="0.9" fill="#20c997"/><rect x="586.10" y="197.1" width="15" height="0.9" fill="#20c997"/><rect x="605.00" y="197.1" width="15" height="0.9" fill="#20c997"/><rect x="623.90" y="154.4" width="15" height="43.10" fill="#20c997"/><rect x="642.80" y="153.5" width="15" height="44.00" fill="#20c997"/><rect x="661.70" y="154.9" width="15" height="42.60" fill="#20c997"/><rect x="680.60" y="157" width="15" height="40.50" fill="#20c997"/><rect x="699.50" y="157.5" width="15" height="40.00" fill="#20c997"/><rect x="718.40" y="153" width="15" height="44.50" fill="#20c997"/><rect x="737.30" y="153" width="15" height="44.50" fill="#20c997"/><rect x="756.20" y="152" width="15" height="45.50" fill="#20c997"/><rect x="775.10" y="151.4" width="15" height="46.10" fill="#20c997"/><rect x="794.00" y="152" width="15" height="45.50" fill="#20c997"/><rect x="812.90" y="151.4" width="15" height="46.10" fill="#20c997"/><rect x="831.80" y="152.5" width="15" height="45.00" fill="#20c997"/><rect x="850.70" y="153.5" width="15" height="44.00" fill="#20c997"/><rect x="869.60" y="152" width="15" height="45.50" fill="#20c997"/><rect x="888.50" y="152.5" width="15" height="45.00" fill="#20c997"/><rect x="907.40" y="152.5" width="15" height="45.00" fill="#20c997"/><rect x="926.30" y="154.5" width="15" height="43.00" fill="#20c997"/><rect x="945.20" y="153.5" width="15" height="44.00" fill="#20c997"/><rect x="964.10" y="151.5" width="15" height="46.00" fill="#20c997"/><rect x="983.00" y="151.5" width="15" height="46.00" fill="#20c997"/><rect x="1001.90" y="151" width="15" height="46.50" fill="#20c997"/><rect x="1020.80" y="149" width="15" height="48.50" fill="#20c997"/><rect x="1039.70" y="151" width="15" height="46.50" fill="#20c997"/><rect x="1058.60" y="150" width="15" height="47.50" fill="#20c997"/><rect x="1077.50" y="151.5" width="15" height="46.00" fill="#20c997"/><rect x="1096.40" y="152" width="15" height="45.50" fill="#20c997"/><rect x="1115.30" y="152" width="15" height="45.50" fill="#45cfa0"/><rect x="1134.20" y="151.5" width="15" height="46.00" fill="#20c997"/><rect x="1153.10" y="150.5" width="15" height="47.00" fill="#20c997"/><rect x="1172.00" y="151" width="15" height="46.50" fill="#20c997"/><rect x="1190.90" y="149.5" width="15" height="48.00" fill="#20c997"/><rect x="1209.80" y="151" width="15" height="46.50" fill="#20c997"/><rect x="1228.70" y="150" width="15" height="47.50" fill="#20c997"/><rect x="1247.60" y="151.5" width="15" height="46.00" fill="#20c997"/><rect x="1266.50" y="152" width="15" height="45.50" fill="#20c997"/><rect x="1285.40" y="151.5" width="15" height="46.00" fill="#20c997"/><rect x="1304.30" y="151.5" width="15" height="46.00" fill="#20c997"/><rect x="1323.20" y="152.5" width="15" height="45.00" fill="#20c997"/><rect x="1342.10" y="150" width="15" height="47.50" fill="#20c997"/><rect x="1361.00" y="150" width="15" height="47.50" fill="#20c997"/><rect x="1379.90" y="152.5" width="15" height="45.00" fill="#20c997"/><rect x="1398.80" y="150" width="15" height="47.50" fill="#20c997"/><rect x="1417.70" y="151" width="15" height="46.50" fill="#20c997"/><rect x="1436.60" y="152.5" width="15" height="45.00" fill="#20c997"/><rect x="1455.50" y="152" width="15" height="45.50" fill="#20c997"/><rect x="1474.40" y="151.5" width="15" height="46.00" fill="#20c997"/><rect x="1493.30" y="148.5" width="15" height="49.00" fill="#20c997"/><rect x="1512.20" y="150" width="15" height="47.50" fill="#20c997"/><rect x="1531.10" y="152.5" width="15" height="45.00" fill="#20c997"/><rect x="1550.00" y="154" width="15" height="43.50" fill="#20c997"/><rect x="1568.90" y="149.5" width="15" height="48.00" fill="#20c997"/><rect x="1587.80" y="150" width="15" height="47.50" fill="#20c997"/><rect x="1606.70" y="153" width="15" height="44.50" fill="#20c997"/><rect x="1625.60" y="150" width="15" height="47.50" fill="#20c997"/><rect x="1644.50" y="151" width="15" height="46.50" fill="#20c997"/><rect x="1663.40" y="151" width="15" height="46.50" fill="#20c997"/><rect x="1682.30" y="151" width="15" height="46.50" fill="#20c997"/><rect x="1701.20" y="192.5" width="15" height="5.00" fill="#20c997"/><rect x="1739.00" y="197.1" width="15" height="0.9" fill="#20c997"/></svg><div style="position:absolute;right:1271px;top:140.15px;line-height:15px;font-family:'Liberation Mono', monospace;font-size:11px;font-weight:400;color:#77797e;white-space:nowrap;-webkit-text-stroke:0.15px currentColor;">2K</div><div style="position:absolute;right:1271px;top:191.25px;line-height:15px;font-family:'Liberation Mono', monospace;font-size:11px;font-weight:400;color:#77797e;white-space:nowrap;-webkit-text-stroke:0.15px currentColor;">0</div><div style="position:absolute;left:492px;top:203.5px;line-height:15px;font-family:'Liberation Mono', monospace;font-size:11px;font-weight:400;color:#6f7176;white-space:nowrap;-webkit-text-stroke:0.15px currentColor;">May 26 3:40:00 PM</div><div style="position:absolute;left:344.79999999999995px;width:800px;text-align:center;top:203.5px;line-height:15px;font-family:'Liberation Mono', monospace;font-size:11px;font-weight:400;color:#6f7176;white-space:nowrap;-webkit-text-stroke:0.15px currentColor;">4:35:00 PM</div><div style="position:absolute;left:514.9px;width:800px;text-align:center;top:203.5px;line-height:15px;font-family:'Liberation Mono', monospace;font-size:11px;font-weight:400;color:#6f7176;white-space:nowrap;-webkit-text-stroke:0.15px currentColor;">5:20:00 PM</div><div style="position:absolute;left:685.0px;width:800px;text-align:center;top:203.5px;line-height:15px;font-family:'Liberation Mono', monospace;font-size:11px;font-weight:400;color:#6f7176;white-space:nowrap;-webkit-text-stroke:0.15px currentColor;">6:05:00 PM</div><div style="position:absolute;left:855.0999999999999px;width:800px;text-align:center;top:203.5px;line-height:15px;font-family:'Liberation Mono', monospace;font-size:11px;font-weight:400;color:#6f7176;white-space:nowrap;-webkit-text-stroke:0.15px currentColor;">6:50:00 PM</div><div style="position:absolute;left:1025.1999999999998px;width:800px;text-align:center;top:203.5px;line-height:15px;font-family:'Liberation Mono', monospace;font-size:11px;font-weight:400;color:#6f7176;white-space:nowrap;-webkit-text-stroke:0.15px currentColor;">7:35:00 PM</div><div style="position:absolute;right:10px;top:203.5px;line-height:15px;font-family:'Liberation Mono', monospace;font-size:11px;font-weight:400;color:#6f7176;white-space:nowrap;-webkit-text-stroke:0.15px currentColor;">9:05:00 PM</div><div style="position:absolute;left:556px;top:166.6px;width:134.25px;height:33.6px;border-radius:6px;background:#1f242c;"></div><svg style="position:absolute;left:572px;top:177.5px;" width="12.5" height="12.5" viewBox="0 0 12.5 12.5"><circle cx="5.2" cy="5.2" r="4.3" fill="none" stroke="#ffffff" stroke-width="1.2"/><line x1="8.3" y1="8.3" x2="11.8" y2="11.8" stroke="#ffffff" stroke-width="1.4"/></svg><div style="position:absolute;left:595.4px;top:176.5px;line-height:17px;font-family:'Liberation Mono', monospace;font-size:12px;font-weight:400;color:#ffffff;white-space:nowrap;-webkit-text-stroke:0.15px currentColor;">View Events</div><div style="position:absolute;left:1133.2px;top:205.8px;width:138px;height:51.5px;box-sizing:border-box;border:1px solid #5c6370;border-radius:2px;background:#1c1d21;"></div><div style="position:absolute;left:1134px;top:227.2px;width:136.5px;height:1px;background:#3e4046;"></div><div style="position:absolute;left:1146px;top:210.25px;line-height:15px;font-family:'Liberation Mono', monospace;font-size:11px;font-weight:400;color:#e4e4e4;white-space:nowrap;-webkit-text-stroke:0.15px currentColor;">May 26 6:15:00 PM</div><div style="position:absolute;left:1146px;top:241.6px;width:12px;height:1px;background:#20c997;"></div><div style="position:absolute;left:1166.5px;top:235.45px;line-height:15px;font-family:'Liberation Mono', monospace;font-size:11px;font-weight:400;color:#20c997;white-space:nowrap;-webkit-text-stroke:0.15px currentColor;">count()</div><div style="position:absolute;left:1212.7px;top:235.45px;line-height:15px;font-family:'Liberation Mono', monospace;font-size:11px;font-weight:400;color:#f0f0f0;white-space:nowrap;-webkit-text-stroke:0.15px currentColor;">: 1691</div><div style="position:absolute;left:1065.8px;top:245.8px;width:150.4px;height:21.2px;box-sizing:border-box;border:1px solid #20e0a0;border-radius:2px;"></div><svg style="position:absolute;left:1075px;top:250.5px;" width="8.5" height="12" viewBox="0 0 8.5 12"><path d="M5.6 0 L0.4 6.8 L3.8 6.8 L2.6 12 L8.2 4.8 L4.8 4.8 Z" fill="#5ef0b8"/></svg><div style="position:absolute;left:1093.2px;top:249.25px;line-height:17px;font-family:'Liberation Mono', monospace;font-size:12px;font-weight:700;color:#25d9a0;white-space:nowrap;-webkit-text-stroke:0.15px currentColor;">Resume Live Tail</div><div style="position:absolute;left:503px;top:267.45px;line-height:17px;font-family:'Liberation Mono', monospace;font-size:12px;font-weight:700;color:#ffffff;white-space:nowrap;-webkit-text-stroke:0.15px currentColor;">Timestamp (Local)</div><div style="position:absolute;left:673px;top:267.45px;line-height:17px;font-family:'Liberation Mono', monospace;font-size:12px;font-weight:700;color:#ffffff;white-space:nowrap;-webkit-text-stroke:0.15px currentColor;">service</div><div style="position:absolute;left:833px;top:267.45px;line-height:17px;font-family:'Liberation Mono', monospace;font-size:12px;font-weight:700;color:#ffffff;white-space:nowrap;-webkit-text-stroke:0.15px currentColor;">level</div><div style="position:absolute;left:948px;top:267.45px;line-height:17px;font-family:'Liberation Mono', monospace;font-size:12px;font-weight:700;color:#ffffff;white-space:nowrap;-webkit-text-stroke:0.15px currentColor;">duration</div><div style="position:absolute;left:1108px;top:267.45px;line-height:17px;font-family:'Liberation Mono', monospace;font-size:12px;font-weight:700;color:#ffffff;white-space:nowrap;-webkit-text-stroke:0.15px currentColor;">SpanName</div><svg style="position:absolute;left:661px;top:269px;" width="2" height="10" viewBox="0 0 2 10"><circle cx="1" cy="1" r="1" fill="#6c7480"/><circle cx="1" cy="5" r="1" fill="#6c7480"/><circle cx="1" cy="9" r="1" fill="#6c7480"/></svg><svg style="position:absolute;left:821px;top:269px;" width="2" height="10" viewBox="0 0 2 10"><circle cx="1" cy="1" r="1" fill="#6c7480"/><circle cx="1" cy="5" r="1" fill="#6c7480"/><circle cx="1" cy="9" r="1" fill="#6c7480"/></svg><svg style="position:absolute;left:936px;top:269px;" width="2" height="10" viewBox="0 0 2 10"><circle cx="1" cy="1" r="1" fill="#6c7480"/><circle cx="1" cy="5" r="1" fill="#6c7480"/><circle cx="1" cy="9" r="1" fill="#6c7480"/></svg><svg style="position:absolute;left:1096px;top:269px;" width="2" height="10" viewBox="0 0 2 10"><circle cx="1" cy="1" r="1" fill="#6c7480"/><circle cx="1" cy="5" r="1" fill="#6c7480"/><circle cx="1" cy="9" r="1" fill="#6c7480"/></svg><svg style="position:absolute;left:1789px;top:269px;" width="2" height="10" viewBox="0 0 2 10"><circle cx="1" cy="1" r="1" fill="#6c7480"/><circle cx="1" cy="5" r="1" fill="#6c7480"/><circle cx="1" cy="9" r="1" fill="#6c7480"/></svg><svg style="position:absolute;left:486px;top:289.75px;" width="6" height="10" viewBox="0 0 6 10"><polyline points="0.6,0.5 5.4,5 0.6,9.5" fill="none" stroke="#c8c8c8" stroke-width="1"/></svg><div style="position:absolute;left:503px;top:287.5px;line-height:17px;font-family:'Liberation Mono', monospace;font-size:12px;font-weight:400;color:#e0e0e0;white-space:nowrap;-webkit-text-stroke:0.15px currentColor;">May 26 9:04:18.410 PM</div><div style="position:absolute;left:673px;top:287.5px;line-height:17px;font-family:'Liberation Mono', monospace;font-size:12px;font-weight:400;color:#f0f0f0;white-space:nowrap;-webkit-text-stroke:0.15px currentColor;">payment</div><div style="position:absolute;left:833px;top:287.5px;line-height:17px;font-family:'Liberation Mono', monospace;font-size:12px;font-weight:400;color:#f48a8a;white-space:nowrap;-webkit-text-stroke:0.15px currentColor;">Error</div><div style="position:absolute;left:948px;top:287.5px;line-height:17px;font-family:'Liberation Mono', monospace;font-size:12px;font-weight:400;color:#f0f0f0;white-space:nowrap;-webkit-text-stroke:0.15px currentColor;">0</div><div style="position:absolute;left:1108px;top:287.5px;line-height:17px;font-family:'Liberation Mono', monospace;font-size:12px;font-weight:400;color:#f0f0f0;white-space:nowrap;-webkit-text-stroke:0.15px currentColor;">Error: The credit card (ending 3139) expired on 4/2025.</div><svg style="position:absolute;left:486px;top:309.75px;" width="6" height="10" viewBox="0 0 6 10"><polyline points="0.6,0.5 5.4,5 0.6,9.5" fill="none" stroke="#c8c8c8" stroke-width="1"/></svg><div style="position:absolute;left:503px;top:307.5px;line-height:17px;font-family:'Liberation Mono', monospace;font-size:12px;font-weight:400;color:#e0e0e0;white-space:nowrap;-webkit-text-stroke:0.15px currentColor;">May 26 9:03:31.187 PM</div><div style="position:absolute;left:673px;top:307.5px;line-height:17px;font-family:'Liberation Mono', monospace;font-size:12px;font-weight:400;color:#f0f0f0;white-space:nowrap;-webkit-text-stroke:0.15px currentColor;">payment</div><div style="position:absolute;left:833px;top:307.5px;line-height:17px;font-family:'Liberation Mono', monospace;font-size:12px;font-weight:400;color:#f48a8a;white-space:nowrap;-webkit-text-stroke:0.15px currentColor;">Error</div><div style="position:absolute;left:948px;top:307.5px;line-height:17px;font-family:'Liberation Mono', monospace;font-size:12px;font-weight:400;color:#f0f0f0;white-space:nowrap;-webkit-text-stroke:0.15px currentColor;">0</div><div style="position:absolute;left:1108px;top:307.5px;line-height:17px;font-family:'Liberation Mono', monospace;font-size:12px;font-weight:400;color:#f0f0f0;white-space:nowrap;-webkit-text-stroke:0.15px currentColor;">Error: The credit card (ending 7175) expired on 4/2025.</div><svg style="position:absolute;left:486px;top:329.75px;" width="6" height="10" viewBox="0 0 6 10"><polyline points="0.6,0.5 5.4,5 0.6,9.5" fill="none" stroke="#c8c8c8" stroke-width="1"/></svg><div style="position:absolute;left:503px;top:327.5px;line-height:17px;font-family:'Liberation Mono', monospace;font-size:12px;font-weight:400;color:#e0e0e0;white-space:nowrap;-webkit-text-stroke:0.15px currentColor;">May 26 8:50:43.624 PM</div><div style="position:absolute;left:673px;top:327.5px;line-height:17px;font-family:'Liberation Mono', monospace;font-size:12px;font-weight:400;color:#f0f0f0;white-space:nowrap;-webkit-text-stroke:0.15px currentColor;">payment</div><div style="position:absolute;left:833px;top:327.5px;line-height:17px;font-family:'Liberation Mono', monospace;font-size:12px;font-weight:400;color:#f48a8a;white-space:nowrap;-webkit-text-stroke:0.15px currentColor;">Error</div><div style="position:absolute;left:948px;top:327.5px;line-height:17px;font-family:'Liberation Mono', monospace;font-size:12px;font-weight:400;color:#f0f0f0;white-space:nowrap;-webkit-text-stroke:0.15px currentColor;">0</div><div style="position:absolute;left:1108px;top:327.5px;line-height:17px;font-family:'Liberation Mono', monospace;font-size:12px;font-weight:400;color:#f0f0f0;white-space:nowrap;-webkit-text-stroke:0.15px currentColor;">Error: Visa cache full: cannot add new item.</div><svg style="position:absolute;left:486px;top:349.75px;" width="6" height="10" viewBox="0 0 6 10"><polyline points="0.6,0.5 5.4,5 0.6,9.5" fill="none" stroke="#c8c8c8" stroke-width="1"/></svg><div style="position:absolute;left:503px;top:347.5px;line-height:17px;font-family:'Liberation Mono', monospace;font-size:12px;font-weight:400;color:#e0e0e0;white-space:nowrap;-webkit-text-stroke:0.15px currentColor;">May 26 8:50:43.613 PM</div><div style="position:absolute;left:673px;top:347.5px;line-height:17px;font-family:'Liberation Mono', monospace;font-size:12px;font-weight:400;color:#f0f0f0;white-space:nowrap;-webkit-text-stroke:0.15px currentColor;">payment</div><div style="position:absolute;left:833px;top:347.5px;line-height:17px;font-family:'Liberation Mono', monospace;font-size:12px;font-weight:400;color:#f48a8a;white-space:nowrap;-webkit-text-stroke:0.15px currentColor;">Error</div><div style="position:absolute;left:948px;top:347.5px;line-height:17px;font-family:'Liberation Mono', monospace;font-size:12px;font-weight:400;color:#f0f0f0;white-space:nowrap;-webkit-text-stroke:0.15px currentColor;">0</div><div style="position:absolute;left:1108px;top:347.5px;line-height:17px;font-family:'Liberation Mono', monospace;font-size:12px;font-weight:400;color:#f0f0f0;white-space:nowrap;-webkit-text-stroke:0.15px currentColor;">Error: Visa cache full: cannot add new item.</div><svg style="position:absolute;left:486px;top:369.75px;" width="6" height="10" viewBox="0 0 6 10"><polyline points="0.6,0.5 5.4,5 0.6,9.5" fill="none" stroke="#c8c8c8" stroke-width="1"/></svg><div style="position:absolute;left:503px;top:367.5px;line-height:17px;font-family:'Liberation Mono', monospace;font-size:12px;font-weight:400;color:#e0e0e0;white-space:nowrap;-webkit-text-stroke:0.15px currentColor;">May 26 8:50:43.534 PM</div><div style="position:absolute;left:673px;top:367.5px;line-height:17px;font-family:'Liberation Mono', monospace;font-size:12px;font-weight:400;color:#f0f0f0;white-space:nowrap;-webkit-text-stroke:0.15px currentColor;">payment</div><div style="position:absolute;left:833px;top:367.5px;line-height:17px;font-family:'Liberation Mono', monospace;font-size:12px;font-weight:400;color:#f48a8a;white-space:nowrap;-webkit-text-stroke:0.15px currentColor;">Error</div><div style="position:absolute;left:948px;top:367.5px;line-height:17px;font-family:'Liberation Mono', monospace;font-size:12px;font-weight:400;color:#f0f0f0;white-space:nowrap;-webkit-text-stroke:0.15px currentColor;">0</div><div style="position:absolute;left:1108px;top:367.5px;line-height:17px;font-family:'Liberation Mono', monospace;font-size:12px;font-weight:400;color:#f0f0f0;white-space:nowrap;-webkit-text-stroke:0.15px currentColor;">Error: Visa cache full: cannot add new item.</div><svg style="position:absolute;left:486px;top:389.75px;" width="6" height="10" viewBox="0 0 6 10"><polyline points="0.6,0.5 5.4,5 0.6,9.5" fill="none" stroke="#c8c8c8" stroke-width="1"/></svg><div style="position:absolute;left:503px;top:387.5px;line-height:17px;font-family:'Liberation Mono', monospace;font-size:12px;font-weight:400;color:#e0e0e0;white-space:nowrap;-webkit-text-stroke:0.15px currentColor;">May 26 8:50:43.466 PM</div><div style="position:absolute;left:673px;top:387.5px;line-height:17px;font-family:'Liberation Mono', monospace;font-size:12px;font-weight:400;color:#f0f0f0;white-space:nowrap;-webkit-text-stroke:0.15px currentColor;">payment</div><div style="position:absolute;left:833px;top:387.5px;line-height:17px;font-family:'Liberation Mono', monospace;font-size:12px;font-weight:400;color:#f48a8a;white-space:nowrap;-webkit-text-stroke:0.15px currentColor;">Error</div><div style="position:absolute;left:948px;top:387.5px;line-height:17px;font-family:'Liberation Mono', monospace;font-size:12px;font-weight:400;color:#f0f0f0;white-space:nowrap;-webkit-text-stroke:0.15px currentColor;">0</div><div style="position:absolute;left:1108px;top:387.5px;line-height:17px;font-family:'Liberation Mono', monospace;font-size:12px;font-weight:400;color:#f0f0f0;white-space:nowrap;-webkit-text-stroke:0.15px currentColor;">Error: Visa cache full: cannot add new item.</div><svg style="position:absolute;left:486px;top:409.75px;" width="6" height="10" viewBox="0 0 6 10"><polyline points="0.6,0.5 5.4,5 0.6,9.5" fill="none" stroke="#c8c8c8" stroke-width="1"/></svg><div style="position:absolute;left:503px;top:407.5px;line-height:17px;font-family:'Liberation Mono', monospace;font-size:12px;font-weight:400;color:#e0e0e0;white-space:nowrap;-webkit-text-stroke:0.15px currentColor;">May 26 8:50:43.455 PM</div><div style="position:absolute;left:673px;top:407.5px;line-height:17px;font-family:'Liberation Mono', monospace;font-size:12px;font-weight:400;color:#f0f0f0;white-space:nowrap;-webkit-text-stroke:0.15px currentColor;">payment</div><div style="position:absolute;left:833px;top:407.5px;line-height:17px;font-family:'Liberation Mono', monospace;font-size:12px;font-weight:400;color:#f48a8a;white-space:nowrap;-webkit-text-stroke:0.15px currentColor;">Error</div><div style="position:absolute;left:948px;top:407.5px;line-height:17px;font-family:'Liberation Mono', monospace;font-size:12px;font-weight:400;color:#f0f0f0;white-space:nowrap;-webkit-text-stroke:0.15px currentColor;">0</div><div style="position:absolute;left:1108px;top:407.5px;line-height:17px;font-family:'Liberation Mono', monospace;font-size:12px;font-weight:400;color:#f0f0f0;white-space:nowrap;-webkit-text-stroke:0.15px currentColor;">Error: Visa cache full: cannot add new item.</div><svg style="position:absolute;left:486px;top:429.75px;" width="6" height="10" viewBox="0 0 6 10"><polyline points="0.6,0.5 5.4,5 0.6,9.5" fill="none" stroke="#c8c8c8" stroke-width="1"/></svg><div style="position:absolute;left:503px;top:427.5px;line-height:17px;font-family:'Liberation Mono', monospace;font-size:12px;font-weight:400;color:#e0e0e0;white-space:nowrap;-webkit-text-stroke:0.15px currentColor;">May 26 8:50:43.444 PM</div><div style="position:absolute;left:673px;top:427.5px;line-height:17px;font-family:'Liberation Mono', monospace;font-size:12px;font-weight:400;color:#f0f0f0;white-space:nowrap;-webkit-text-stroke:0.15px currentColor;">payment</div><div style="position:absolute;left:833px;top:427.5px;line-height:17px;font-family:'Liberation Mono', monospace;font-size:12px;font-weight:400;color:#f48a8a;white-space:nowrap;-webkit-text-stroke:0.15px currentColor;">Error</div><div style="position:absolute;left:948px;top:427.5px;line-height:17px;font-family:'Liberation Mono', monospace;font-size:12px;font-weight:400;color:#f0f0f0;white-space:nowrap;-webkit-text-stroke:0.15px currentColor;">0</div><div style="position:absolute;left:1108px;top:427.5px;line-height:17px;font-family:'Liberation Mono', monospace;font-size:12px;font-weight:400;color:#f0f0f0;white-space:nowrap;-webkit-text-stroke:0.15px currentColor;">Error: Visa cache full: cannot add new item.</div><svg style="position:absolute;left:486px;top:449.75px;" width="6" height="10" viewBox="0 0 6 10"><polyline points="0.6,0.5 5.4,5 0.6,9.5" fill="none" stroke="#c8c8c8" stroke-width="1"/></svg><div style="position:absolute;left:503px;top:447.5px;line-height:17px;font-family:'Liberation Mono', monospace;font-size:12px;font-weight:400;color:#e0e0e0;white-space:nowrap;-webkit-text-stroke:0.15px currentColor;">May 26 8:50:43.349 PM</div><div style="position:absolute;left:673px;top:447.5px;line-height:17px;font-family:'Liberation Mono', monospace;font-size:12px;font-weight:400;color:#f0f0f0;white-space:nowrap;-webkit-text-stroke:0.15px currentColor;">payment</div><div style="position:absolute;left:833px;top:447.5px;line-height:17px;font-family:'Liberation Mono', monospace;font-size:12px;font-weight:400;color:#f48a8a;white-space:nowrap;-webkit-text-stroke:0.15px currentColor;">Error</div><div style="position:absolute;left:948px;top:447.5px;line-height:17px;font-family:'Liberation Mono', monospace;font-size:12px;font-weight:400;color:#f0f0f0;white-space:nowrap;-webkit-text-stroke:0.15px currentColor;">0</div><div style="position:absolute;left:1108px;top:447.5px;line-height:17px;font-family:'Liberation Mono', monospace;font-size:12px;font-weight:400;color:#f0f0f0;white-space:nowrap;-webkit-text-stroke:0.15px currentColor;">Error: Visa cache full: cannot add new item.</div><svg style="position:absolute;left:486px;top:469.75px;" width="6" height="10" viewBox="0 0 6 10"><polyline points="0.6,0.5 5.4,5 0.6,9.5" fill="none" stroke="#c8c8c8" stroke-width="1"/></svg><div style="position:absolute;left:503px;top:467.5px;line-height:17px;font-family:'Liberation Mono', monospace;font-size:12px;font-weight:400;color:#e0e0e0;white-space:nowrap;-webkit-text-stroke:0.15px currentColor;">May 26 8:50:43.307 PM</div><div style="position:absolute;left:673px;top:467.5px;line-height:17px;font-family:'Liberation Mono', monospace;font-size:12px;font-weight:400;color:#f0f0f0;white-space:nowrap;-webkit-text-stroke:0.15px currentColor;">payment</div><div style="position:absolute;left:833px;top:467.5px;line-height:17px;font-family:'Liberation Mono', monospace;font-size:12px;font-weight:400;color:#f48a8a;white-space:nowrap;-webkit-text-stroke:0.15px currentColor;">Error</div><div style="position:absolute;left:948px;top:467.5px;line-height:17px;font-family:'Liberation Mono', monospace;font-size:12px;font-weight:400;color:#f0f0f0;white-space:nowrap;-webkit-text-stroke:0.15px currentColor;">0</div><div style="position:absolute;left:1108px;top:467.5px;line-height:17px;font-family:'Liberation Mono', monospace;font-size:12px;font-weight:400;color:#f0f0f0;white-space:nowrap;-webkit-text-stroke:0.15px currentColor;">Error: Visa cache full: cannot add new item.</div><svg style="position:absolute;left:486px;top:489.75px;" width="6" height="10" viewBox="0 0 6 10"><polyline points="0.6,0.5 5.4,5 0.6,9.5" fill="none" stroke="#c8c8c8" stroke-width="1"/></svg><div style="position:absolute;left:503px;top:487.5px;line-height:17px;font-family:'Liberation Mono', monospace;font-size:12px;font-weight:400;color:#e0e0e0;white-space:nowrap;-webkit-text-stroke:0.15px currentColor;">May 26 8:50:42.878 PM</div><div style="position:absolute;left:673px;top:487.5px;line-height:17px;font-family:'Liberation Mono', monospace;font-size:12px;font-weight:400;color:#f0f0f0;white-space:nowrap;-webkit-text-stroke:0.15px currentColor;">payment</div><div style="position:absolute;left:833px;top:487.5px;line-height:17px;font-family:'Liberation Mono', monospace;font-size:12px;font-weight:400;color:#f48a8a;white-space:nowrap;-webkit-text-stroke:0.15px currentColor;">Error</div><div style="position:absolute;left:948px;top:487.5px;line-height:17px;font-family:'Liberation Mono', monospace;font-size:12px;font-weight:400;color:#f0f0f0;white-space:nowrap;-webkit-text-stroke:0.15px currentColor;">0</div><div style="position:absolute;left:1108px;top:487.5px;line-height:17px;font-family:'Liberation Mono', monospace;font-size:12px;font-weight:400;color:#f0f0f0;white-space:nowrap;-webkit-text-stroke:0.15px currentColor;">Error: Visa cache full: cannot add new item.</div><svg style="position:absolute;left:486px;top:509.75px;" width="6" height="10" viewBox="0 0 6 10"><polyline points="0.6,0.5 5.4,5 0.6,9.5" fill="none" stroke="#c8c8c8" stroke-width="1"/></svg><div style="position:absolute;left:503px;top:507.5px;line-height:17px;font-family:'Liberation Mono', monospace;font-size:12px;font-weight:400;color:#e0e0e0;white-space:nowrap;-webkit-text-stroke:0.15px currentColor;">May 26 8:50:42.655 PM</div><div style="position:absolute;left:673px;top:507.5px;line-height:17px;font-family:'Liberation Mono', monospace;font-size:12px;font-weight:400;color:#f0f0f0;white-space:nowrap;-webkit-text-stroke:0.15px currentColor;">payment</div><div style="position:absolute;left:833px;top:507.5px;line-height:17px;font-family:'Liberation Mono', monospace;font-size:12px;font-weight:400;color:#f48a8a;white-space:nowrap;-webkit-text-stroke:0.15px currentColor;">Error</div><div style="position:absolute;left:948px;top:507.5px;line-height:17px;font-family:'Liberation Mono', monospace;font-size:12px;font-weight:400;color:#f0f0f0;white-space:nowrap;-webkit-text-stroke:0.15px currentColor;">0</div><div style="position:absolute;left:1108px;top:507.5px;line-height:17px;font-family:'Liberation Mono', monospace;font-size:12px;font-weight:400;color:#f0f0f0;white-space:nowrap;-webkit-text-stroke:0.15px currentColor;">Error: Visa cache full: cannot add new item.</div><svg style="position:absolute;left:486px;top:529.75px;" width="6" height="10" viewBox="0 0 6 10"><polyline points="0.6,0.5 5.4,5 0.6,9.5" fill="none" stroke="#c8c8c8" stroke-width="1"/></svg><div style="position:absolute;left:503px;top:527.5px;line-height:17px;font-family:'Liberation Mono', monospace;font-size:12px;font-weight:400;color:#e0e0e0;white-space:nowrap;-webkit-text-stroke:0.15px currentColor;">May 26 8:50:41.115 PM</div><div style="position:absolute;left:673px;top:527.5px;line-height:17px;font-family:'Liberation Mono', monospace;font-size:12px;font-weight:400;color:#f0f0f0;white-space:nowrap;-webkit-text-stroke:0.15px currentColor;">payment</div><div style="position:absolute;left:833px;top:527.5px;line-height:17px;font-family:'Liberation Mono', monospace;font-size:12px;font-weight:400;color:#f48a8a;white-space:nowrap;-webkit-text-stroke:0.15px currentColor;">Error</div><div style="position:absolute;left:948px;top:527.5px;line-height:17px;font-family:'Liberation Mono', monospace;font-size:12px;font-weight:400;color:#f0f0f0;white-space:nowrap;-webkit-text-stroke:0.15px currentColor;">0</div><div style="position:absolute;left:1108px;top:527.5px;line-height:17px;font-family:'Liberation Mono', monospace;font-size:12px;font-weight:400;color:#f0f0f0;white-space:nowrap;-webkit-text-stroke:0.15px currentColor;">Error: Visa cache full: cannot add new item.</div><svg style="position:absolute;left:486px;top:549.75px;" width="6" height="10" viewBox="0 0 6 10"><polyline points="0.6,0.5 5.4,5 0.6,9.5" fill="none" stroke="#c8c8c8" stroke-width="1"/></svg><div style="position:absolute;left:503px;top:547.5px;line-height:17px;font-family:'Liberation Mono', monospace;font-size:12px;font-weight:400;color:#e0e0e0;white-space:nowrap;-webkit-text-stroke:0.15px currentColor;">May 26 8:50:39.901 PM</div><div style="position:absolute;left:673px;top:547.5px;line-height:17px;font-family:'Liberation Mono', monospace;font-size:12px;font-weight:400;color:#f0f0f0;white-space:nowrap;-webkit-text-stroke:0.15px currentColor;">payment</div><div style="position:absolute;left:833px;top:547.5px;line-height:17px;font-family:'Liberation Mono', monospace;font-size:12px;font-weight:400;color:#f48a8a;white-space:nowrap;-webkit-text-stroke:0.15px currentColor;">Error</div><div style="position:absolute;left:948px;top:547.5px;line-height:17px;font-family:'Liberation Mono', monospace;font-size:12px;font-weight:400;color:#f0f0f0;white-space:nowrap;-webkit-text-stroke:0.15px currentColor;">0</div><div style="position:absolute;left:1108px;top:547.5px;line-height:17px;font-family:'Liberation Mono', monospace;font-size:12px;font-weight:400;color:#f0f0f0;white-space:nowrap;-webkit-text-stroke:0.15px currentColor;">Error: Visa cache full: cannot add new item.</div><svg style="position:absolute;left:486px;top:569.75px;" width="6" height="10" viewBox="0 0 6 10"><polyline points="0.6,0.5 5.4,5 0.6,9.5" fill="none" stroke="#c8c8c8" stroke-width="1"/></svg><div style="position:absolute;left:503px;top:567.5px;line-height:17px;font-family:'Liberation Mono', monospace;font-size:12px;font-weight:400;color:#e0e0e0;white-space:nowrap;-webkit-text-stroke:0.15px currentColor;">May 26 8:50:39.856 PM</div><div style="position:absolute;left:673px;top:567.5px;line-height:17px;font-family:'Liberation Mono', monospace;font-size:12px;font-weight:400;color:#f0f0f0;white-space:nowrap;-webkit-text-stroke:0.15px currentColor;">payment</div><div style="position:absolute;left:833px;top:567.5px;line-height:17px;font-family:'Liberation Mono', monospace;font-size:12px;font-weight:400;color:#f48a8a;white-space:nowrap;-webkit-text-stroke:0.15px currentColor;">Error</div><div style="position:absolute;left:948px;top:567.5px;line-height:17px;font-family:'Liberation Mono', monospace;font-size:12px;font-weight:400;color:#f0f0f0;white-space:nowrap;-webkit-text-stroke:0.15px currentColor;">0</div><div style="position:absolute;left:1108px;top:567.5px;line-height:17px;font-family:'Liberation Mono', monospace;font-size:12px;font-weight:400;color:#f0f0f0;white-space:nowrap;-webkit-text-stroke:0.15px currentColor;">Error: Visa cache full: cannot add new item.</div><svg style="position:absolute;left:486px;top:589.75px;" width="6" height="10" viewBox="0 0 6 10"><polyline points="0.6,0.5 5.4,5 0.6,9.5" fill="none" stroke="#c8c8c8" stroke-width="1"/></svg><div style="position:absolute;left:503px;top:587.5px;line-height:17px;font-family:'Liberation Mono', monospace;font-size:12px;font-weight:400;color:#e0e0e0;white-space:nowrap;-webkit-text-stroke:0.15px currentColor;">May 26 8:50:39.692 PM</div><div style="position:absolute;left:673px;top:587.5px;line-height:17px;font-family:'Liberation Mono', monospace;font-size:12px;font-weight:400;color:#f0f0f0;white-space:nowrap;-webkit-text-stroke:0.15px currentColor;">payment</div><div style="position:absolute;left:833px;top:587.5px;line-height:17px;font-family:'Liberation Mono', monospace;font-size:12px;font-weight:400;color:#f48a8a;white-space:nowrap;-webkit-text-stroke:0.15px currentColor;">Error</div><div style="position:absolute;left:948px;top:587.5px;line-height:17px;font-family:'Liberation Mono', monospace;font-size:12px;font-weight:400;color:#f0f0f0;white-space:nowrap;-webkit-text-stroke:0.15px currentColor;">0</div><div style="position:absolute;left:1108px;top:587.5px;line-height:17px;font-family:'Liberation Mono', monospace;font-size:12px;font-weight:400;color:#f0f0f0;white-space:nowrap;-webkit-text-stroke:0.15px currentColor;">Error: Visa cache full: cannot add new item.</div><svg style="position:absolute;left:486px;top:609.75px;" width="6" height="10" viewBox="0 0 6 10"><polyline points="0.6,0.5 5.4,5 0.6,9.5" fill="none" stroke="#c8c8c8" stroke-width="1"/></svg><div style="position:absolute;left:503px;top:607.5px;line-height:17px;font-family:'Liberation Mono', monospace;font-size:12px;font-weight:400;color:#e0e0e0;white-space:nowrap;-webkit-text-stroke:0.15px currentColor;">May 26 8:50:39.641 PM</div><div style="position:absolute;left:673px;top:607.5px;line-height:17px;font-family:'Liberation Mono', monospace;font-size:12px;font-weight:400;color:#f0f0f0;white-space:nowrap;-webkit-text-stroke:0.15px currentColor;">payment</div><div style="position:absolute;left:833px;top:607.5px;line-height:17px;font-family:'Liberation Mono', monospace;font-size:12px;font-weight:400;color:#f48a8a;white-space:nowrap;-webkit-text-stroke:0.15px currentColor;">Error</div><div style="position:absolute;left:948px;top:607.5px;line-height:17px;font-family:'Liberation Mono', monospace;font-size:12px;font-weight:400;color:#f0f0f0;white-space:nowrap;-webkit-text-stroke:0.15px currentColor;">0</div><div style="position:absolute;left:1108px;top:607.5px;line-height:17px;font-family:'Liberation Mono', monospace;font-size:12px;font-weight:400;color:#f0f0f0;white-space:nowrap;-webkit-text-stroke:0.15px currentColor;">Error: Visa cache full: cannot add new item.</div><svg style="position:absolute;left:486px;top:629.75px;" width="6" height="10" viewBox="0 0 6 10"><polyline points="0.6,0.5 5.4,5 0.6,9.5" fill="none" stroke="#c8c8c8" stroke-width="1"/></svg><div style="position:absolute;left:503px;top:627.5px;line-height:17px;font-family:'Liberation Mono', monospace;font-size:12px;font-weight:400;color:#e0e0e0;white-space:nowrap;-webkit-text-stroke:0.15px currentColor;">May 26 8:50:39.551 PM</div><div style="position:absolute;left:673px;top:627.5px;line-height:17px;font-family:'Liberation Mono', monospace;font-size:12px;font-weight:400;color:#f0f0f0;white-space:nowrap;-webkit-text-stroke:0.15px currentColor;">payment</div><div style="position:absolute;left:833px;top:627.5px;line-height:17px;font-family:'Liberation Mono', monospace;font-size:12px;font-weight:400;color:#f48a8a;white-space:nowrap;-webkit-text-stroke:0.15px currentColor;">Error</div><div style="position:absolute;left:948px;top:627.5px;line-height:17px;font-family:'Liberation Mono', monospace;font-size:12px;font-weight:400;color:#f0f0f0;white-space:nowrap;-webkit-text-stroke:0.15px currentColor;">0</div><div style="position:absolute;left:1108px;top:627.5px;line-height:17px;font-family:'Liberation Mono', monospace;font-size:12px;font-weight:400;color:#f0f0f0;white-space:nowrap;-webkit-text-stroke:0.15px currentColor;">Error: Visa cache full: cannot add new item.</div><svg style="position:absolute;left:486px;top:649.75px;" width="6" height="10" viewBox="0 0 6 10"><polyline points="0.6,0.5 5.4,5 0.6,9.5" fill="none" stroke="#c8c8c8" stroke-width="1"/></svg><div style="position:absolute;left:503px;top:647.5px;line-height:17px;font-family:'Liberation Mono', monospace;font-size:12px;font-weight:400;color:#e0e0e0;white-space:nowrap;-webkit-text-stroke:0.15px currentColor;">May 26 8:50:39.513 PM</div><div style="position:absolute;left:673px;top:647.5px;line-height:17px;font-family:'Liberation Mono', monospace;font-size:12px;font-weight:400;color:#f0f0f0;white-space:nowrap;-webkit-text-stroke:0.15px currentColor;">payment</div><div style="position:absolute;left:833px;top:647.5px;line-height:17px;font-family:'Liberation Mono', monospace;font-size:12px;font-weight:400;color:#f48a8a;white-space:nowrap;-webkit-text-stroke:0.15px currentColor;">Error</div><div style="position:absolute;left:948px;top:647.5px;line-height:17px;font-family:'Liberation Mono', monospace;font-size:12px;font-weight:400;color:#f0f0f0;white-space:nowrap;-webkit-text-stroke:0.15px currentColor;">0</div><div style="position:absolute;left:1108px;top:647.5px;line-height:17px;font-family:'Liberation Mono', monospace;font-size:12px;font-weight:400;color:#f0f0f0;white-space:nowrap;-webkit-text-stroke:0.15px currentColor;">Error: Visa cache full: cannot add new item.</div><svg style="position:absolute;left:486px;top:669.75px;" width="6" height="10" viewBox="0 0 6 10"><polyline points="0.6,0.5 5.4,5 0.6,9.5" fill="none" stroke="#c8c8c8" stroke-width="1"/></svg><div style="position:absolute;left:503px;top:667.5px;line-height:17px;font-family:'Liberation Mono', monospace;font-size:12px;font-weight:400;color:#e0e0e0;white-space:nowrap;-webkit-text-stroke:0.15px currentColor;">May 26 8:50:39.453 PM</div><div style="position:absolute;left:673px;top:667.5px;line-height:17px;font-family:'Liberation Mono', monospace;font-size:12px;font-weight:400;color:#f0f0f0;white-space:nowrap;-webkit-text-stroke:0.15px currentColor;">payment</div><div style="position:absolute;left:833px;top:667.5px;line-height:17px;font-family:'Liberation Mono', monospace;font-size:12px;font-weight:400;color:#f48a8a;white-space:nowrap;-webkit-text-stroke:0.15px currentColor;">Error</div><div style="position:absolute;left:948px;top:667.5px;line-height:17px;font-family:'Liberation Mono', monospace;font-size:12px;font-weight:400;color:#f0f0f0;white-space:nowrap;-webkit-text-stroke:0.15px currentColor;">0</div><div style="position:absolute;left:1108px;top:667.5px;line-height:17px;font-family:'Liberation Mono', monospace;font-size:12px;font-weight:400;color:#f0f0f0;white-space:nowrap;-webkit-text-stroke:0.15px currentColor;">Error: Visa cache full: cannot add new item.</div><svg style="position:absolute;left:486px;top:689.75px;" width="6" height="10" viewBox="0 0 6 10"><polyline points="0.6,0.5 5.4,5 0.6,9.5" fill="none" stroke="#c8c8c8" stroke-width="1"/></svg><div style="position:absolute;left:503px;top:687.5px;line-height:17px;font-family:'Liberation Mono', monospace;font-size:12px;font-weight:400;color:#e0e0e0;white-space:nowrap;-webkit-text-stroke:0.15px currentColor;">May 26 8:50:39.442 PM</div><div style="position:absolute;left:673px;top:687.5px;line-height:17px;font-family:'Liberation Mono', monospace;font-size:12px;font-weight:400;color:#f0f0f0;white-space:nowrap;-webkit-text-stroke:0.15px currentColor;">payment</div><div style="position:absolute;left:833px;top:687.5px;line-height:17px;font-family:'Liberation Mono', monospace;font-size:12px;font-weight:400;color:#f48a8a;white-space:nowrap;-webkit-text-stroke:0.15px currentColor;">Error</div><div style="position:absolute;left:948px;top:687.5px;line-height:17px;font-family:'Liberation Mono', monospace;font-size:12px;font-weight:400;color:#f0f0f0;white-space:nowrap;-webkit-text-stroke:0.15px currentColor;">0</div><div style="position:absolute;left:1108px;top:687.5px;line-height:17px;font-family:'Liberation Mono', monospace;font-size:12px;font-weight:400;color:#f0f0f0;white-space:nowrap;-webkit-text-stroke:0.15px currentColor;">Error: Visa cache full: cannot add new item.</div><svg style="position:absolute;left:486px;top:709.75px;" width="6" height="10" viewBox="0 0 6 10"><polyline points="0.6,0.5 5.4,5 0.6,9.5" fill="none" stroke="#c8c8c8" stroke-width="1"/></svg><div style="position:absolute;left:503px;top:707.5px;line-height:17px;font-family:'Liberation Mono', monospace;font-size:12px;font-weight:400;color:#e0e0e0;white-space:nowrap;-webkit-text-stroke:0.15px currentColor;">May 26 8:50:39.399 PM</div><div style="position:absolute;left:673px;top:707.5px;line-height:17px;font-family:'Liberation Mono', monospace;font-size:12px;font-weight:400;color:#f0f0f0;white-space:nowrap;-webkit-text-stroke:0.15px currentColor;">payment</div><div style="position:absolute;left:833px;top:707.5px;line-height:17px;font-family:'Liberation Mono', monospace;font-size:12px;font-weight:400;color:#f48a8a;white-space:nowrap;-webkit-text-stroke:0.15px currentColor;">Error</div><div style="position:absolute;left:948px;top:707.5px;line-height:17px;font-family:'Liberation Mono', monospace;font-size:12px;font-weight:400;color:#f0f0f0;white-space:nowrap;-webkit-text-stroke:0.15px currentColor;">0</div><div style="position:absolute;left:1108px;top:707.5px;line-height:17px;font-family:'Liberation Mono', monospace;font-size:12px;font-weight:400;color:#f0f0f0;white-space:nowrap;-webkit-text-stroke:0.15px currentColor;">Error: Visa cache full: cannot add new item.</div><svg style="position:absolute;left:486px;top:729.75px;" width="6" height="10" viewBox="0 0 6 10"><polyline points="0.6,0.5 5.4,5 0.6,9.5" fill="none" stroke="#c8c8c8" stroke-width="1"/></svg><div style="position:absolute;left:503px;top:727.5px;line-height:17px;font-family:'Liberation Mono', monospace;font-size:12px;font-weight:400;color:#e0e0e0;white-space:nowrap;-webkit-text-stroke:0.15px currentColor;">May 26 8:50:39.379 PM</div><div style="position:absolute;left:673px;top:727.5px;line-height:17px;font-family:'Liberation Mono', monospace;font-size:12px;font-weight:400;color:#f0f0f0;white-space:nowrap;-webkit-text-stroke:0.15px currentColor;">payment</div><div style="position:absolute;left:833px;top:727.5px;line-height:17px;font-family:'Liberation Mono', monospace;font-size:12px;font-weight:400;color:#f48a8a;white-space:nowrap;-webkit-text-stroke:0.15px currentColor;">Error</div><div style="position:absolute;left:948px;top:727.5px;line-height:17px;font-family:'Liberation Mono', monospace;font-size:12px;font-weight:400;color:#f0f0f0;white-space:nowrap;-webkit-text-stroke:0.15px currentColor;">0</div><div style="position:absolute;left:1108px;top:727.5px;line-height:17px;font-family:'Liberation Mono', monospace;font-size:12px;font-weight:400;color:#f0f0f0;white-space:nowrap;-webkit-text-stroke:0.15px currentColor;">Error: Visa cache full: cannot add new item.</div><svg style="position:absolute;left:486px;top:749.75px;" width="6" height="10" viewBox="0 0 6 10"><polyline points="0.6,0.5 5.4,5 0.6,9.5" fill="none" stroke="#c8c8c8" stroke-width="1"/></svg><div style="position:absolute;left:503px;top:747.5px;line-height:17px;font-family:'Liberation Mono', monospace;font-size:12px;font-weight:400;color:#e0e0e0;white-space:nowrap;-webkit-text-stroke:0.15px currentColor;">May 26 8:50:39.337 PM</div><div style="position:absolute;left:673px;top:747.5px;line-height:17px;font-family:'Liberation Mono', monospace;font-size:12px;font-weight:400;color:#f0f0f0;white-space:nowrap;-webkit-text-stroke:0.15px currentColor;">payment</div><div style="position:absolute;left:833px;top:747.5px;line-height:17px;font-family:'Liberation Mono', monospace;font-size:12px;font-weight:400;color:#f48a8a;white-space:nowrap;-webkit-text-stroke:0.15px currentColor;">Error</div><div style="position:absolute;left:948px;top:747.5px;line-height:17px;font-family:'Liberation Mono', monospace;font-size:12px;font-weight:400;color:#f0f0f0;white-space:nowrap;-webkit-text-stroke:0.15px currentColor;">0</div><div style="position:absolute;left:1108px;top:747.5px;line-height:17px;font-family:'Liberation Mono', monospace;font-size:12px;font-weight:400;color:#f0f0f0;white-space:nowrap;-webkit-text-stroke:0.15px currentColor;">Error: Visa cache full: cannot add new item.</div><svg style="position:absolute;left:486px;top:769.75px;" width="6" height="10" viewBox="0 0 6 10"><polyline points="0.6,0.5 5.4,5 0.6,9.5" fill="none" stroke="#c8c8c8" stroke-width="1"/></svg><div style="position:absolute;left:503px;top:767.5px;line-height:17px;font-family:'Liberation Mono', monospace;font-size:12px;font-weight:400;color:#e0e0e0;white-space:nowrap;-webkit-text-stroke:0.15px currentColor;">May 26 8:50:39.298 PM</div><div style="position:absolute;left:673px;top:767.5px;line-height:17px;font-family:'Liberation Mono', monospace;font-size:12px;font-weight:400;color:#f0f0f0;white-space:nowrap;-webkit-text-stroke:0.15px currentColor;">payment</div><div style="position:absolute;left:833px;top:767.5px;line-height:17px;font-family:'Liberation Mono', monospace;font-size:12px;font-weight:400;color:#f48a8a;white-space:nowrap;-webkit-text-stroke:0.15px currentColor;">Error</div><div style="position:absolute;left:948px;top:767.5px;line-height:17px;font-family:'Liberation Mono', monospace;font-size:12px;font-weight:400;color:#f0f0f0;white-space:nowrap;-webkit-text-stroke:0.15px currentColor;">0</div><div style="position:absolute;left:1108px;top:767.5px;line-height:17px;font-family:'Liberation Mono', monospace;font-size:12px;font-weight:400;color:#f0f0f0;white-space:nowrap;-webkit-text-stroke:0.15px currentColor;">Error: Visa cache full: cannot add new item.</div><svg style="position:absolute;left:486px;top:789.75px;" width="6" height="10" viewBox="0 0 6 10"><polyline points="0.6,0.5 5.4,5 0.6,9.5" fill="none" stroke="#c8c8c8" stroke-width="1"/></svg><div style="position:absolute;left:503px;top:787.5px;line-height:17px;font-family:'Liberation Mono', monospace;font-size:12px;font-weight:400;color:#e0e0e0;white-space:nowrap;-webkit-text-stroke:0.15px currentColor;">May 26 8:50:39.287 PM</div><div style="position:absolute;left:673px;top:787.5px;line-height:17px;font-family:'Liberation Mono', monospace;font-size:12px;font-weight:400;color:#f0f0f0;white-space:nowrap;-webkit-text-stroke:0.15px currentColor;">payment</div><div style="position:absolute;left:833px;top:787.5px;line-height:17px;font-family:'Liberation Mono', monospace;font-size:12px;font-weight:400;color:#f48a8a;white-space:nowrap;-webkit-text-stroke:0.15px currentColor;">Error</div><div style="position:absolute;left:948px;top:787.5px;line-height:17px;font-family:'Liberation Mono', monospace;font-size:12px;font-weight:400;color:#f0f0f0;white-space:nowrap;-webkit-text-stroke:0.15px currentColor;">0</div><div style="position:absolute;left:1108px;top:787.5px;line-height:17px;font-family:'Liberation Mono', monospace;font-size:12px;font-weight:400;color:#f0f0f0;white-space:nowrap;-webkit-text-stroke:0.15px currentColor;">Error: Visa cache full: cannot add new item.</div><svg style="position:absolute;left:486px;top:809.75px;" width="6" height="10" viewBox="0 0 6 10"><polyline points="0.6,0.5 5.4,5 0.6,9.5" fill="none" stroke="#c8c8c8" stroke-width="1"/></svg><div style="position:absolute;left:503px;top:807.5px;line-height:17px;font-family:'Liberation Mono', monospace;font-size:12px;font-weight:400;color:#e0e0e0;white-space:nowrap;-webkit-text-stroke:0.15px currentColor;">May 26 8:50:39.275 PM</div><div style="position:absolute;left:673px;top:807.5px;line-height:17px;font-family:'Liberation Mono', monospace;font-size:12px;font-weight:400;color:#f0f0f0;white-space:nowrap;-webkit-text-stroke:0.15px currentColor;">payment</div><div style="position:absolute;left:833px;top:807.5px;line-height:17px;font-family:'Liberation Mono', monospace;font-size:12px;font-weight:400;color:#f48a8a;white-space:nowrap;-webkit-text-stroke:0.15px currentColor;">Error</div><div style="position:absolute;left:948px;top:807.5px;line-height:17px;font-family:'Liberation Mono', monospace;font-size:12px;font-weight:400;color:#f0f0f0;white-space:nowrap;-webkit-text-stroke:0.15px currentColor;">0</div><div style="position:absolute;left:1108px;top:807.5px;line-height:17px;font-family:'Liberation Mono', monospace;font-size:12px;font-weight:400;color:#f0f0f0;white-space:nowrap;-webkit-text-stroke:0.15px currentColor;">Error: Visa cache full: cannot add new item.</div><svg style="position:absolute;left:486px;top:829.75px;" width="6" height="10" viewBox="0 0 6 10"><polyline points="0.6,0.5 5.4,5 0.6,9.5" fill="none" stroke="#c8c8c8" stroke-width="1"/></svg><div style="position:absolute;left:503px;top:827.5px;line-height:17px;font-family:'Liberation Mono', monospace;font-size:12px;font-weight:400;color:#e0e0e0;white-space:nowrap;-webkit-text-stroke:0.15px currentColor;">May 26 8:50:39.121 PM</div><div style="position:absolute;left:673px;top:827.5px;line-height:17px;font-family:'Liberation Mono', monospace;font-size:12px;font-weight:400;color:#f0f0f0;white-space:nowrap;-webkit-text-stroke:0.15px currentColor;">payment</div><div style="position:absolute;left:833px;top:827.5px;line-height:17px;font-family:'Liberation Mono', monospace;font-size:12px;font-weight:400;color:#f48a8a;white-space:nowrap;-webkit-text-stroke:0.15px currentColor;">Error</div><div style="position:absolute;left:948px;top:827.5px;line-height:17px;font-family:'Liberation Mono', monospace;font-size:12px;font-weight:400;color:#f0f0f0;white-space:nowrap;-webkit-text-stroke:0.15px currentColor;">0</div><div style="position:absolute;left:1108px;top:827.5px;line-height:17px;font-family:'Liberation Mono', monospace;font-size:12px;font-weight:400;color:#f0f0f0;white-space:nowrap;-webkit-text-stroke:0.15px currentColor;">Error: Visa cache full: cannot add new item.</div><svg style="position:absolute;left:486px;top:849.75px;" width="6" height="10" viewBox="0 0 6 10"><polyline points="0.6,0.5 5.4,5 0.6,9.5" fill="none" stroke="#c8c8c8" stroke-width="1"/></svg><div style="position:absolute;left:503px;top:847.5px;line-height:17px;font-family:'Liberation Mono', monospace;font-size:12px;font-weight:400;color:#e0e0e0;white-space:nowrap;-webkit-text-stroke:0.15px currentColor;">May 26 8:50:38.918 PM</div><div style="position:absolute;left:673px;top:847.5px;line-height:17px;font-family:'Liberation Mono', monospace;font-size:12px;font-weight:400;color:#f0f0f0;white-space:nowrap;-webkit-text-stroke:0.15px currentColor;">payment</div><div style="position:absolute;left:833px;top:847.5px;line-height:17px;font-family:'Liberation Mono', monospace;font-size:12px;font-weight:400;color:#f48a8a;white-space:nowrap;-webkit-text-stroke:0.15px currentColor;">Error</div><div style="position:absolute;left:948px;top:847.5px;line-height:17px;font-family:'Liberation Mono', monospace;font-size:12px;font-weight:400;color:#f0f0f0;white-space:nowrap;-webkit-text-stroke:0.15px currentColor;">0</div><div style="position:absolute;left:1108px;top:847.5px;line-height:17px;font-family:'Liberation Mono', monospace;font-size:12px;font-weight:400;color:#f0f0f0;white-space:nowrap;-webkit-text-stroke:0.15px currentColor;">Error: Visa cache full: cannot add new item.</div><svg style="position:absolute;left:486px;top:869.75px;" width="6" height="10" viewBox="0 0 6 10"><polyline points="0.6,0.5 5.4,5 0.6,9.5" fill="none" stroke="#c8c8c8" stroke-width="1"/></svg><div style="position:absolute;left:503px;top:867.5px;line-height:17px;font-family:'Liberation Mono', monospace;font-size:12px;font-weight:400;color:#e0e0e0;white-space:nowrap;-webkit-text-stroke:0.15px currentColor;">May 26 8:50:36.436 PM</div><div style="position:absolute;left:673px;top:867.5px;line-height:17px;font-family:'Liberation Mono', monospace;font-size:12px;font-weight:400;color:#f0f0f0;white-space:nowrap;-webkit-text-stroke:0.15px currentColor;">payment</div><div style="position:absolute;left:833px;top:867.5px;line-height:17px;font-family:'Liberation Mono', monospace;font-size:12px;font-weight:400;color:#f48a8a;white-space:nowrap;-webkit-text-stroke:0.15px currentColor;">Error</div><div style="position:absolute;left:948px;top:867.5px;line-height:17px;font-family:'Liberation Mono', monospace;font-size:12px;font-weight:400;color:#f0f0f0;white-space:nowrap;-webkit-text-stroke:0.15px currentColor;">0</div><div style="position:absolute;left:1108px;top:867.5px;line-height:17px;font-family:'Liberation Mono', monospace;font-size:12px;font-weight:400;color:#f0f0f0;white-space:nowrap;-webkit-text-stroke:0.15px currentColor;">Error: Visa cache full: cannot add new item.</div><svg style="position:absolute;left:486px;top:889.75px;" width="6" height="10" viewBox="0 0 6 10"><polyline points="0.6,0.5 5.4,5 0.6,9.5" fill="none" stroke="#c8c8c8" stroke-width="1"/></svg><div style="position:absolute;left:503px;top:887.5px;line-height:17px;font-family:'Liberation Mono', monospace;font-size:12px;font-weight:400;color:#e0e0e0;white-space:nowrap;-webkit-text-stroke:0.15px currentColor;">May 26 8:50:36.339 PM</div><div style="position:absolute;left:673px;top:887.5px;line-height:17px;font-family:'Liberation Mono', monospace;font-size:12px;font-weight:400;color:#f0f0f0;white-space:nowrap;-webkit-text-stroke:0.15px currentColor;">payment</div><div style="position:absolute;left:833px;top:887.5px;line-height:17px;font-family:'Liberation Mono', monospace;font-size:12px;font-weight:400;color:#f48a8a;white-space:nowrap;-webkit-text-stroke:0.15px currentColor;">Error</div><div style="position:absolute;left:948px;top:887.5px;line-height:17px;font-family:'Liberation Mono', monospace;font-size:12px;font-weight:400;color:#f0f0f0;white-space:nowrap;-webkit-text-stroke:0.15px currentColor;">0</div><div style="position:absolute;left:1108px;top:887.5px;line-height:17px;font-family:'Liberation Mono', monospace;font-size:12px;font-weight:400;color:#f0f0f0;white-space:nowrap;-webkit-text-stroke:0.15px currentColor;">Error: Visa cache full: cannot add new item.</div><svg style="position:absolute;left:486px;top:909.75px;" width="6" height="10" viewBox="0 0 6 10"><polyline points="0.6,0.5 5.4,5 0.6,9.5" fill="none" stroke="#c8c8c8" stroke-width="1"/></svg><div style="position:absolute;left:503px;top:907.5px;line-height:17px;font-family:'Liberation Mono', monospace;font-size:12px;font-weight:400;color:#e0e0e0;white-space:nowrap;-webkit-text-stroke:0.15px currentColor;">May 26 8:50:36.329 PM</div><div style="position:absolute;left:673px;top:907.5px;line-height:17px;font-family:'Liberation Mono', monospace;font-size:12px;font-weight:400;color:#f0f0f0;white-space:nowrap;-webkit-text-stroke:0.15px currentColor;">payment</div><div style="position:absolute;left:833px;top:907.5px;line-height:17px;font-family:'Liberation Mono', monospace;font-size:12px;font-weight:400;color:#f48a8a;white-space:nowrap;-webkit-text-stroke:0.15px currentColor;">Error</div><div style="position:absolute;left:948px;top:907.5px;line-height:17px;font-family:'Liberation Mono', monospace;font-size:12px;font-weight:400;color:#f0f0f0;white-space:nowrap;-webkit-text-stroke:0.15px currentColor;">0</div><div style="position:absolute;left:1108px;top:907.5px;line-height:17px;font-family:'Liberation Mono', monospace;font-size:12px;font-weight:400;color:#f0f0f0;white-space:nowrap;-webkit-text-stroke:0.15px currentColor;">Error: Visa cache full: cannot add new item.</div></div><div style="position:absolute;left:0;top:0;width:1800px;height:928px;box-sizing:border-box;border:1px solid #45464c;border-top-width:0.5px;border-radius:0 0 10px 10px;pointer-events:none;"></div>
</body></html>
